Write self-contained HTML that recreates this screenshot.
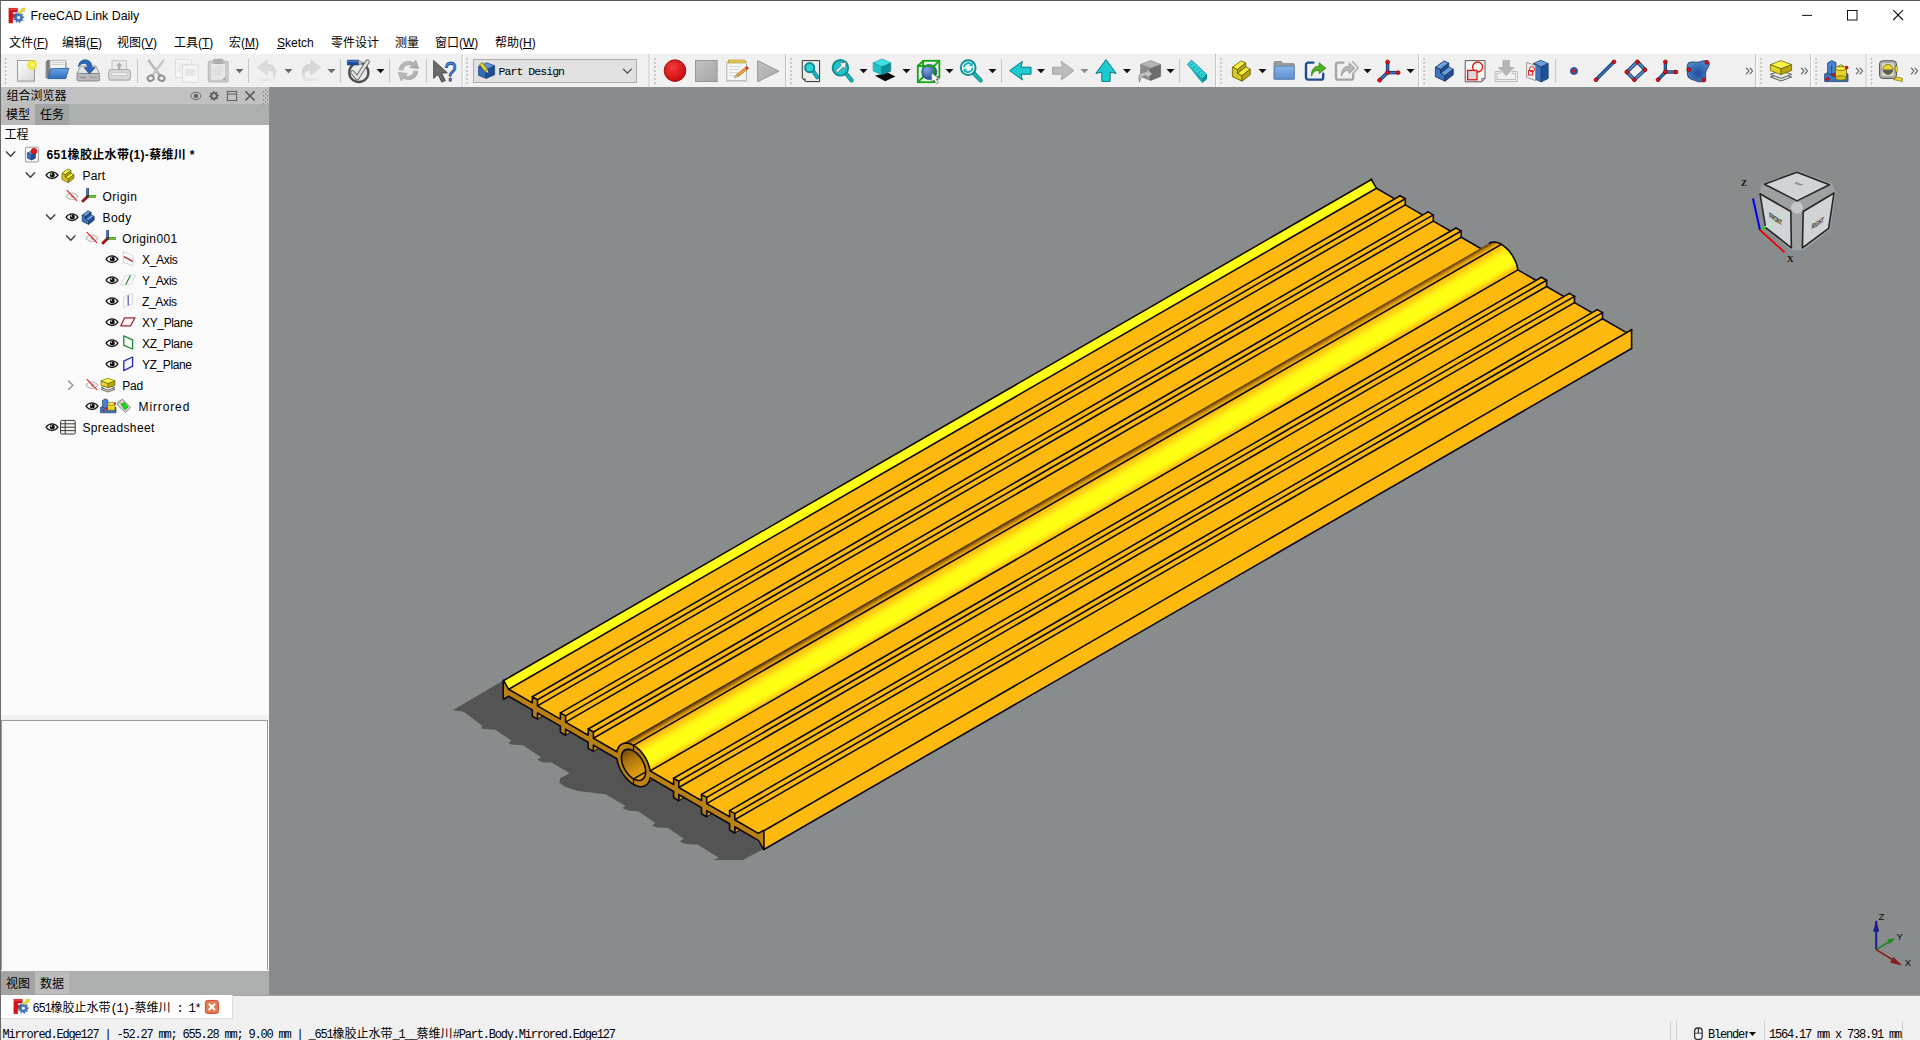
<!DOCTYPE html>
<html lang="zh-CN"><head><meta charset="utf-8"><title>FreeCAD Link Daily</title>
<style>
html,body{margin:0;padding:0;}
body{width:1920px;height:1040px;overflow:hidden;position:relative;background:#f0f0f0;font-family:"Liberation Sans","Noto Sans CJK SC",sans-serif;font-size:12px;color:#000;}
.abs{position:absolute;}
#titlebar{left:0;top:0;width:1920px;height:31px;background:#fff;}
#menubar{left:0;top:31px;width:1920px;height:23px;background:#fff;}
#winborder{left:0;top:0;width:1920px;height:1040px;box-sizing:border-box;border-left:1px solid #6b6b6b;border-top:1px solid #555;pointer-events:none;z-index:50;}
#title{left:30.5px;top:8px;font-size:12.4px;line-height:16px;white-space:nowrap;}
.menu{top:35px;line-height:16px;font-size:12px;white-space:nowrap;}
.menu u{text-decoration:underline;text-underline-offset:1px;}
#toolbar{left:0;top:54px;width:1920px;height:33px;background:#f0f0f0;}
#view3d{left:269px;top:87px;width:1651px;height:908px;background:#888c8d;overflow:hidden;}
#dock{left:1px;top:87px;width:268px;height:908px;background:#fafafa;}
#docktitle{left:0;top:0;width:268px;height:17px;background:#c1c1c1;}
#docktitle span{position:absolute;left:5.5px;top:1px;font-size:12px;line-height:17px;}
#tabs1{left:0;top:17px;width:268px;height:21px;background:#adafae;}
.tab{position:absolute;top:0;height:21px;line-height:23px;font-size:12px;text-align:center;}
#hdr{left:3.5px;top:40px;font-size:12px;line-height:17px;}
#band{left:0;top:628px;width:268px;height:5px;background:#f0f0f0;}
#panel2{left:0;top:633px;width:267px;height:250px;box-sizing:border-box;border:1px solid #9c9c9c;border-bottom:none;background:#fafafa;}
#tabs2{left:0;top:884px;width:268px;height:24px;background:#adafae;}
#mdibar{left:0;top:995px;width:1920px;height:25px;background:#f0f0f0;}
#mdiline{left:232px;top:0;width:1688px;height:1px;background:#a3a5a5;}
#mditab{left:1px;top:0px;width:231px;height:23px;background:#fff;border-right:1px solid #dadada;border-bottom:1px solid #dedede;}
#mditab span{position:absolute;left:31px;top:4px;font-size:12px;line-height:15px;white-space:nowrap;font-family:"Liberation Mono","Noto Sans CJK SC",monospace;}
#status{left:0;top:1020px;width:1920px;height:20px;background:#f0f0f0;}
.st{position:absolute;top:5.5px;line-height:14px;font-size:12px;white-space:nowrap;font-family:"Liberation Mono","Noto Sans CJK SC",monospace;letter-spacing:-1.2px;}
.row{position:absolute;left:0;width:268px;height:21px;line-height:24px;font-size:12px;white-space:nowrap;}
.row span{position:absolute;top:0;}
.row b{font-weight:700;}
svg{display:block;}

.st i,.st2 i{font-style:normal;letter-spacing:0;font-family:"Noto Sans CJK SC",sans-serif;}
#mditab span.st2{left:31.5px;top:3.5px;font-size:12px;line-height:15px;letter-spacing:-1.2px;font-family:"Liberation Mono","Noto Sans CJK SC",monospace;}

</style></head>
<body>
<div id="titlebar" class="abs"></div>
<div id="menubar" class="abs"></div>
<div id="title" class="abs">FreeCAD Link Daily</div>
<div class="abs menu" style="left:9px">文件(<u>F</u>)</div>
<div class="abs menu" style="left:62px">编辑(<u>E</u>)</div>
<div class="abs menu" style="left:117px">视图(<u>V</u>)</div>
<div class="abs menu" style="left:174px">工具(<u>T</u>)</div>
<div class="abs menu" style="left:229px">宏(<u>M</u>)</div>
<div class="abs menu" style="left:277px"><u>S</u>ketch</div>
<div class="abs menu" style="left:331px">零件设计</div>
<div class="abs menu" style="left:395px">测量</div>
<div class="abs menu" style="left:435px">窗口(<u>W</u>)</div>
<div class="abs menu" style="left:495px">帮助(<u>H</u>)</div>
<div id="toolbar" class="abs"><svg width="1920" height="33" viewBox="0 54 1920 33"><defs>
<linearGradient id="gpg" x1="0" y1="0" x2="1" y2="1"><stop offset="0" stop-color="#ffffff"/><stop offset="1" stop-color="#d6d6d6"/></linearGradient>
<radialGradient id="gglow"><stop offset="0" stop-color="#ffffff"/><stop offset="0.28" stop-color="#f6f040"/><stop offset="0.62" stop-color="#ece428" stop-opacity="0.95"/><stop offset="1" stop-color="#ece428" stop-opacity="0"/></radialGradient>
<linearGradient id="gblue" x1="0" y1="0" x2="0" y2="1"><stop offset="0" stop-color="#6ea4e4"/><stop offset="1" stop-color="#2f6fbe"/></linearGradient>
<linearGradient id="gblue2" x1="0" y1="0" x2="0" y2="1"><stop offset="0" stop-color="#8ab4e6"/><stop offset="1" stop-color="#5b90d2"/></linearGradient>
<radialGradient id="gred" cx="0.4" cy="0.35" r="0.7"><stop offset="0" stop-color="#f43a3a"/><stop offset="1" stop-color="#c20808"/></radialGradient>
<radialGradient id="gsph" cx="0.35" cy="0.35" r="0.75"><stop offset="0" stop-color="#7ea6e0"/><stop offset="1" stop-color="#1c4488"/></radialGradient>
<radialGradient id="gblob" cx="0.5" cy="0.6" r="0.6"><stop offset="0" stop-color="#1f4f96"/><stop offset="1" stop-color="#4f86cc"/></radialGradient>
<linearGradient id="ggray" x1="0" y1="0" x2="1" y2="1"><stop offset="0" stop-color="#c2c2c2"/><stop offset="1" stop-color="#a6a6a6"/></linearGradient>
</defs>
<rect x="4.9" y="58.2" width="1.7" height="1.7" fill="#b0b0b0"/><rect x="6" y="59.3" width="1.3" height="1.3" fill="#fdfdfd"/><rect x="4.9" y="62.25" width="1.7" height="1.7" fill="#b0b0b0"/><rect x="6" y="63.35" width="1.3" height="1.3" fill="#fdfdfd"/><rect x="4.9" y="66.3" width="1.7" height="1.7" fill="#b0b0b0"/><rect x="6" y="67.4" width="1.3" height="1.3" fill="#fdfdfd"/><rect x="4.9" y="70.35" width="1.7" height="1.7" fill="#b0b0b0"/><rect x="6" y="71.45" width="1.3" height="1.3" fill="#fdfdfd"/><rect x="4.9" y="74.4" width="1.7" height="1.7" fill="#b0b0b0"/><rect x="6" y="75.5" width="1.3" height="1.3" fill="#fdfdfd"/><rect x="4.9" y="78.45" width="1.7" height="1.7" fill="#b0b0b0"/><rect x="6" y="79.55" width="1.3" height="1.3" fill="#fdfdfd"/><rect x="4.9" y="82.5" width="1.7" height="1.7" fill="#b0b0b0"/><rect x="6" y="83.6" width="1.3" height="1.3" fill="#fdfdfd"/>
<rect x="17.5" y="60.5" width="17" height="20.5" fill="url(#gpg)" stroke="#9c9c9c" stroke-width="1"/>
<line x1="17" y1="81.8" x2="35" y2="81.8" stroke="#b8b8b8" stroke-width="1" stroke-linecap="butt"/>
<circle cx="32.2" cy="64.8" r="6" fill="url(#gglow)"/>
<path d="M46.5,62 l0.8,-1.5 h6 l1.2,1.8 h11.5 v15.5 h-19.5z" fill="#7e7e7e" stroke="#5e5e5e" stroke-width="0.8" stroke-linejoin="round" stroke-linecap="round"/>
<rect x="50" y="60.3" width="15.5" height="11" fill="#f2f2f2" stroke="#a8a8a8" stroke-width="0.8"/>
<line x1="52" y1="62.5" x2="63.5" y2="62.5" stroke="#c4c4c4" stroke-width="0.8" stroke-linecap="butt"/><line x1="52" y1="64.5" x2="63.5" y2="64.5" stroke="#c4c4c4" stroke-width="0.8" stroke-linecap="butt"/>
<polygon points="48,78.6 50.8,68.8 68.8,68.3 65.6,78.6" fill="url(#gblue)" stroke="#2a5ea6" stroke-width="0.9" stroke-linejoin="round"/>
<polygon points="80.5,66 96,66 99.5,73.5 77,73.5" fill="#e2e2e2" stroke="#8e8e8e" stroke-width="0.9" stroke-linejoin="round"/>
<rect x="77" y="73.5" width="22.5" height="7.5" fill="#b9b9b9" stroke="#868686" stroke-width="0.9" rx="1.2"/>
<line x1="80" y1="77.5" x2="86" y2="77.5" stroke="#8a8a8a" stroke-width="1.2" stroke-linecap="butt"/><line x1="90" y1="77.5" x2="97" y2="77.5" stroke="#9a9a9a" stroke-width="1.2" stroke-linecap="butt"/>
<path d="M78.6,66.5 C78.5,60.5 84.5,58.6 88.5,60.6 C91,61.9 92,64.5 91.8,67.6 L95.2,67.6 L89.3,74 L84.2,67.6 L87.6,67.6 C87.7,65 86.4,63.5 84.4,63.4 C82,63.3 80,64.4 78.6,66.5Z" fill="#2c68bc" stroke="#1d4c94" stroke-width="0.7" stroke-linejoin="round" stroke-linecap="round"/>
<rect x="112" y="60.8" width="14.5" height="10" fill="#ebebeb" stroke="#bdbdbd" stroke-width="0.9"/>
<polygon points="119.2,62.6 122.4,66 120.4,66 120.4,69 118,69 118,66 116,66" fill="#ababab"/>
<rect x="108.5" y="69.5" width="22" height="10.5" fill="#d6d6d6" stroke="#a4a4a4" stroke-width="0.9" rx="2.5"/>
<rect x="111.5" y="72.8" width="16" height="2.6" fill="#f6f6f6" stroke="#b0b0b0" stroke-width="0.6" rx="1"/>
<line x1="109.5" y1="80.6" x2="129.5" y2="80.6" stroke="#bcbcbc" stroke-width="1" stroke-linecap="butt"/>
<line x1="137.5" y1="59" x2="137.5" y2="83" stroke="#c8c8c8" stroke-width="1" stroke-linecap="butt"/>
<line x1="148.8" y1="60.6" x2="160.2" y2="76" stroke="#b4b4b4" stroke-width="2.4" stroke-linecap="round"/><line x1="163.4" y1="60.6" x2="152" y2="76" stroke="#c6c6c6" stroke-width="2.4" stroke-linecap="round"/>
<ellipse cx="150.7" cy="78.2" rx="3.1" ry="2.7" fill="none" stroke="#8e8e8e" stroke-width="1.9" transform="rotate(-25 150.7 78.2)"/>
<ellipse cx="161.5" cy="78.2" rx="3.1" ry="2.7" fill="none" stroke="#8e8e8e" stroke-width="1.9" transform="rotate(25 161.5 78.2)"/>
<rect x="175.5" y="59.6" width="16" height="18" fill="#f4f4f4" stroke="#dcdcdc" stroke-width="0.9"/>
<line x1="177.5" y1="64" x2="189" y2="64" stroke="#e2e2e2" stroke-width="0.8" stroke-linecap="butt"/>
<line x1="177.5" y1="66.4" x2="189" y2="66.4" stroke="#e2e2e2" stroke-width="0.8" stroke-linecap="butt"/>
<line x1="177.5" y1="68.8" x2="189" y2="68.8" stroke="#e2e2e2" stroke-width="0.8" stroke-linecap="butt"/>
<line x1="177.5" y1="71.2" x2="189" y2="71.2" stroke="#e2e2e2" stroke-width="0.8" stroke-linecap="butt"/>
<rect x="182.5" y="65" width="15.5" height="17" fill="#f7f7f7" stroke="#d4d4d4" stroke-width="0.9"/>
<rect x="185" y="68.5" width="10.5" height="7.5" fill="#e6e6e6"/>
<rect x="208.3" y="61.2" width="19.8" height="20.8" fill="#cdcdcd" stroke="#b4b4b4" stroke-width="1" rx="1.2"/>
<rect x="210.8" y="63.6" width="14.8" height="16.6" fill="#e6e6e6" stroke="#c0c0c0" stroke-width="0.6"/>
<rect x="213.5" y="59.2" width="9.4" height="4.2" fill="#b2b2b2" stroke="#9c9c9c" stroke-width="0.7" rx="1"/>
<line x1="212.5" y1="67" x2="222" y2="67" stroke="#d4d4d4" stroke-width="0.8" stroke-linecap="butt"/>
<line x1="212.5" y1="69.4" x2="222" y2="69.4" stroke="#d4d4d4" stroke-width="0.8" stroke-linecap="butt"/>
<line x1="212.5" y1="71.8" x2="222" y2="71.8" stroke="#d4d4d4" stroke-width="0.8" stroke-linecap="butt"/>
<line x1="212.5" y1="74.2" x2="222" y2="74.2" stroke="#d4d4d4" stroke-width="0.8" stroke-linecap="butt"/>
<polygon points="222,80.2 225.6,76.6 225.6,80.2" fill="#a8a8a8"/>
<polygon points="235.5,69 243.5,69 239.5,73.2" fill="#6a6a6a"/>
<line x1="248.5" y1="59" x2="248.5" y2="83" stroke="#c8c8c8" stroke-width="1" stroke-linecap="butt"/>
<path d="M257.5,67.2 L267.2,59.8 L267.2,64.4 C274.5,64.2 278.5,70.5 273.5,78.6 C275,72.8 272.5,70.2 267.2,70.4 L267.2,74.8Z" fill="#dadada" stroke="#d0d0d0" stroke-width="0.6" stroke-linejoin="round" stroke-linecap="round"/>
<ellipse cx="267" cy="79.6" rx="8.5" ry="1.6" fill="#e6e6e6"/>
<polygon points="284.5,69 292.5,69 288.5,73.2" fill="#6a6a6a"/>
<path d="M320.5,67.2 L310.8,59.8 L310.8,64.4 C303.5,64.2 299.5,70.5 304.5,78.6 C303,72.8 305.5,70.2 310.8,70.4 L310.8,74.8Z" fill="#d6d6d6" stroke="#cccccc" stroke-width="0.6" stroke-linejoin="round" stroke-linecap="round"/>
<ellipse cx="311" cy="79.6" rx="8.5" ry="1.6" fill="#e6e6e6"/>
<polygon points="327.5,69 335.5,69 331.5,73.2" fill="#6a6a6a"/>
<line x1="340.5" y1="59" x2="340.5" y2="83" stroke="#c8c8c8" stroke-width="1" stroke-linecap="butt"/>
<circle cx="358.8" cy="72.4" r="9.6" fill="#e9e9e9" stroke="#4e4e4e" stroke-width="2.3"/>
<path d="M352.6,72.4 L357.2,78 L367.6,61.6" fill="none" stroke="#6c6c6c" stroke-width="4.6" stroke-linejoin="round" stroke-linecap="round"/>
<path d="M352.6,72.4 L357.2,78 L367.6,61.6" fill="none" stroke="#e2e2e2" stroke-width="2.6" stroke-linejoin="round" stroke-linecap="round"/>
<polygon points="347.4,60.2 358.6,60.2 358.6,65 347.4,65" fill="#1d4d9c" stroke="#143a78" stroke-width="0.6" stroke-linejoin="round"/>
<polygon points="358.6,60.2 363.6,62.6 358.6,65" fill="#c8c8c8" stroke="#666" stroke-width="0.6" stroke-linejoin="round"/>
<line x1="347.6" y1="61.4" x2="358.4" y2="61.4" stroke="#5f8ad0" stroke-width="0.9" stroke-linecap="butt"/>
<polygon points="376.5,69 384.5,69 380.5,73.2" fill="#111"/>
<line x1="389.5" y1="59" x2="389.5" y2="83" stroke="#c8c8c8" stroke-width="1" stroke-linecap="butt"/>
<path d="M399.2,69.6 C399.6,62.8 407.4,59.4 413.6,62.8 L415.6,60 L418.8,68.6 L409.8,67.6 L411.8,65.2 C408,63.6 403.6,65.6 403.2,69.8Z" fill="url(#ggray)" stroke="#a2a2a2" stroke-width="0.7" stroke-linejoin="round" stroke-linecap="round"/>
<path d="M417.8,71.4 C417.4,78.2 409.6,81.6 403.4,78.2 L401.4,81 L398.2,72.4 L407.2,73.4 L405.2,75.8 C409,77.4 413.4,75.4 413.8,71.2Z" fill="url(#ggray)" stroke="#a2a2a2" stroke-width="0.7" stroke-linejoin="round" stroke-linecap="round"/>
<line x1="426.5" y1="59" x2="426.5" y2="83" stroke="#c8c8c8" stroke-width="1" stroke-linecap="butt"/>
<polygon points="433.6,60.4 433.6,78.4 438,74.6 441.8,82.2 445.4,80.6 441.6,73.2 447.4,72.8" fill="#6a6a66" stroke="#3e3e3c" stroke-width="0.8" stroke-linejoin="round"/>
<text x="444.4" y="81" font-family="Liberation Sans,sans-serif" font-size="28" fill="#4f8ad6" stroke="#1d4c98" stroke-width="1" textLength="12" lengthAdjust="spacingAndGlyphs">?</text>
<line x1="462.2" y1="54" x2="462.2" y2="87" stroke="#bcbcbc" stroke-width="1" stroke-linecap="butt"/><line x1="463.3" y1="54" x2="463.3" y2="87" stroke="#fcfcfc" stroke-width="1.2" stroke-linecap="butt"/>
<rect x="466.4" y="58.2" width="1.7" height="1.7" fill="#b0b0b0"/><rect x="467.5" y="59.3" width="1.3" height="1.3" fill="#fdfdfd"/><rect x="466.4" y="62.25" width="1.7" height="1.7" fill="#b0b0b0"/><rect x="467.5" y="63.35" width="1.3" height="1.3" fill="#fdfdfd"/><rect x="466.4" y="66.3" width="1.7" height="1.7" fill="#b0b0b0"/><rect x="467.5" y="67.4" width="1.3" height="1.3" fill="#fdfdfd"/><rect x="466.4" y="70.35" width="1.7" height="1.7" fill="#b0b0b0"/><rect x="467.5" y="71.45" width="1.3" height="1.3" fill="#fdfdfd"/><rect x="466.4" y="74.4" width="1.7" height="1.7" fill="#b0b0b0"/><rect x="467.5" y="75.5" width="1.3" height="1.3" fill="#fdfdfd"/><rect x="466.4" y="78.45" width="1.7" height="1.7" fill="#b0b0b0"/><rect x="467.5" y="79.55" width="1.3" height="1.3" fill="#fdfdfd"/><rect x="466.4" y="82.5" width="1.7" height="1.7" fill="#b0b0b0"/><rect x="467.5" y="83.6" width="1.3" height="1.3" fill="#fdfdfd"/>
<rect x="473.5" y="59.5" width="163" height="23" fill="#e1e1e1" stroke="#adadad" stroke-width="1"/>
<polygon points="478.6,66.4 486.2,69.6 486.2,78.4 478.6,75.4" fill="#2f6cbc" stroke="#173e80" stroke-width="0.7" stroke-linejoin="round"/>
<polygon points="486.2,69.6 494.6,65.8 494.6,74.8 486.2,78.4" fill="#1c4c94" stroke="#173e80" stroke-width="0.7" stroke-linejoin="round"/>
<polygon points="478.6,66.4 486.8,62.8 494.6,65.8 486.2,69.6" fill="#5d93dc" stroke="#173e80" stroke-width="0.7" stroke-linejoin="round"/>
<polygon points="479.6,64.6 482.4,62.6 487.6,69.4 484.8,71.4" fill="#e8d43c" stroke="#6a5a00" stroke-width="0.7" stroke-linejoin="round"/>
<polygon points="484.8,71.4 487.6,69.4 488.6,73.2" fill="#f4f0e8" stroke="#555" stroke-width="0.6" stroke-linejoin="round"/>
<text x="498.5" y="75" font-family="Liberation Mono,monospace" font-size="11.5" fill="#000" textLength="66.5" lengthAdjust="spacing">Part Design</text>
<path d="M623.4,69.2 L627.4,73.2 L631.4,69.2" fill="none" stroke="#444" stroke-width="1.2" stroke-linejoin="round" stroke-linecap="round"/>
<line x1="649.2" y1="54" x2="649.2" y2="87" stroke="#bcbcbc" stroke-width="1" stroke-linecap="butt"/><line x1="650.3" y1="54" x2="650.3" y2="87" stroke="#fcfcfc" stroke-width="1.2" stroke-linecap="butt"/>
<rect x="654.4" y="58.2" width="1.7" height="1.7" fill="#b0b0b0"/><rect x="655.5" y="59.3" width="1.3" height="1.3" fill="#fdfdfd"/><rect x="654.4" y="62.25" width="1.7" height="1.7" fill="#b0b0b0"/><rect x="655.5" y="63.35" width="1.3" height="1.3" fill="#fdfdfd"/><rect x="654.4" y="66.3" width="1.7" height="1.7" fill="#b0b0b0"/><rect x="655.5" y="67.4" width="1.3" height="1.3" fill="#fdfdfd"/><rect x="654.4" y="70.35" width="1.7" height="1.7" fill="#b0b0b0"/><rect x="655.5" y="71.45" width="1.3" height="1.3" fill="#fdfdfd"/><rect x="654.4" y="74.4" width="1.7" height="1.7" fill="#b0b0b0"/><rect x="655.5" y="75.5" width="1.3" height="1.3" fill="#fdfdfd"/><rect x="654.4" y="78.45" width="1.7" height="1.7" fill="#b0b0b0"/><rect x="655.5" y="79.55" width="1.3" height="1.3" fill="#fdfdfd"/><rect x="654.4" y="82.5" width="1.7" height="1.7" fill="#b0b0b0"/><rect x="655.5" y="83.6" width="1.3" height="1.3" fill="#fdfdfd"/>
<circle cx="675" cy="70.6" r="10.8" fill="url(#gred)" stroke="#9c0606" stroke-width="0.9"/>
<rect x="695.5" y="60.5" width="21.6" height="21" fill="url(#ggray)" stroke="#969696" stroke-width="1"/>
<rect x="726.8" y="62" width="19.6" height="18.4" fill="#f5f5f3" stroke="#adadad" stroke-width="0.9"/>
<line x1="726" y1="81" x2="747.4" y2="81" stroke="#c4c4c4" stroke-width="1.2" stroke-linecap="butt"/>
<rect x="728.6" y="60" width="16.4" height="3" fill="#d8b83a" stroke="#a88c1c" stroke-width="0.6"/>
<line x1="730" y1="59.8" x2="730" y2="62.8" stroke="#f4e49a" stroke-width="0.6" stroke-linecap="butt"/>
<line x1="732" y1="59.8" x2="732" y2="62.8" stroke="#f4e49a" stroke-width="0.6" stroke-linecap="butt"/>
<line x1="734" y1="59.8" x2="734" y2="62.8" stroke="#f4e49a" stroke-width="0.6" stroke-linecap="butt"/>
<line x1="736" y1="59.8" x2="736" y2="62.8" stroke="#f4e49a" stroke-width="0.6" stroke-linecap="butt"/>
<line x1="738" y1="59.8" x2="738" y2="62.8" stroke="#f4e49a" stroke-width="0.6" stroke-linecap="butt"/>
<line x1="740" y1="59.8" x2="740" y2="62.8" stroke="#f4e49a" stroke-width="0.6" stroke-linecap="butt"/>
<line x1="742" y1="59.8" x2="742" y2="62.8" stroke="#f4e49a" stroke-width="0.6" stroke-linecap="butt"/>
<line x1="744" y1="59.8" x2="744" y2="62.8" stroke="#f4e49a" stroke-width="0.6" stroke-linecap="butt"/>
<line x1="729.5" y1="66.5" x2="741" y2="66.5" stroke="#cfcfcf" stroke-width="0.8" stroke-linecap="butt"/>
<line x1="729.5" y1="69.5" x2="739.8" y2="69.5" stroke="#cfcfcf" stroke-width="0.8" stroke-linecap="butt"/>
<line x1="729.5" y1="72.5" x2="738.6" y2="72.5" stroke="#cfcfcf" stroke-width="0.8" stroke-linecap="butt"/>
<line x1="729.5" y1="75.5" x2="737.4" y2="75.5" stroke="#cfcfcf" stroke-width="0.8" stroke-linecap="butt"/>
<polygon points="736.6,74.4 745.4,67.4 747.2,69.6 738.2,76.6" fill="#eaa03a" stroke="#a8661a" stroke-width="0.6" stroke-linejoin="round"/>
<polygon points="745.4,67.4 747,66.2 748.6,68.4 747.2,69.6" fill="#e43a3a" stroke="#a01818" stroke-width="0.5" stroke-linejoin="round"/>
<polygon points="736.6,74.4 738.2,76.6 734.2,77.6" fill="#e8d8b0" stroke="#7a5a2a" stroke-width="0.5" stroke-linejoin="round"/>
<polygon points="757.6,60.6 779,71.2 757.6,81.8" fill="url(#ggray)" stroke="#9a9a9a" stroke-width="1" stroke-linejoin="round"/>
<line x1="785.7" y1="54" x2="785.7" y2="87" stroke="#bcbcbc" stroke-width="1" stroke-linecap="butt"/><line x1="786.8" y1="54" x2="786.8" y2="87" stroke="#fcfcfc" stroke-width="1.2" stroke-linecap="butt"/>
<rect x="790.4" y="58.2" width="1.7" height="1.7" fill="#b0b0b0"/><rect x="791.5" y="59.3" width="1.3" height="1.3" fill="#fdfdfd"/><rect x="790.4" y="62.25" width="1.7" height="1.7" fill="#b0b0b0"/><rect x="791.5" y="63.35" width="1.3" height="1.3" fill="#fdfdfd"/><rect x="790.4" y="66.3" width="1.7" height="1.7" fill="#b0b0b0"/><rect x="791.5" y="67.4" width="1.3" height="1.3" fill="#fdfdfd"/><rect x="790.4" y="70.35" width="1.7" height="1.7" fill="#b0b0b0"/><rect x="791.5" y="71.45" width="1.3" height="1.3" fill="#fdfdfd"/><rect x="790.4" y="74.4" width="1.7" height="1.7" fill="#b0b0b0"/><rect x="791.5" y="75.5" width="1.3" height="1.3" fill="#fdfdfd"/><rect x="790.4" y="78.45" width="1.7" height="1.7" fill="#b0b0b0"/><rect x="791.5" y="79.55" width="1.3" height="1.3" fill="#fdfdfd"/><rect x="790.4" y="82.5" width="1.7" height="1.7" fill="#b0b0b0"/><rect x="791.5" y="83.6" width="1.3" height="1.3" fill="#fdfdfd"/>
<path d="M802.6,60.6 H819.6 V81.6 H805.6 L802.6,78.6Z" fill="#ecece6" stroke="#333" stroke-width="1" stroke-linejoin="round" stroke-linecap="round"/>
<polygon points="802.6,78.6 805.6,78.6 805.6,81.6" fill="#555"/>
<line x1="812.82" y1="70.82" x2="817.4" y2="77.4" stroke="#0e8c94" stroke-width="4.2" stroke-linecap="round"/><line x1="812.82" y1="70.82" x2="817.4" y2="77.4" stroke="#19b4bc" stroke-width="2.4" stroke-linecap="round"/><circle cx="809.6" cy="67.6" r="4.6" fill="#2fd0d6" stroke="#0e8c94" stroke-width="1.9"/>
<line x1="845.86" y1="73.26" x2="851.6" y2="80.4" stroke="#0e8c94" stroke-width="4.2" stroke-linecap="round"/><line x1="845.86" y1="73.26" x2="851.6" y2="80.4" stroke="#19b4bc" stroke-width="2.4" stroke-linecap="round"/><circle cx="840.4" cy="67.8" r="7.8" fill="#22c4ca" stroke="#0e8c94" stroke-width="1.9"/>
<polygon points="846.2,62.2 845.2,69 843.2,67 837.6,72.6 835.8,70.8 841.4,65.2 839.4,63.2" fill="#f2f2f2" stroke="#6a6a6a" stroke-width="0.7" stroke-linejoin="round"/>
<polygon points="859.5,69 867.5,69 863.5,73.2" fill="#111"/>
<polygon points="875,75.8 885.2,81.2 895.4,76.4 887.6,72.4" fill="#0a0a0a"/>
<polygon points="873.2,62.8 882,66.6 882,74.8 873.2,71" fill="#1fc0c6" stroke="#11979e" stroke-width="0.6" stroke-linejoin="round"/>
<polygon points="882,66.6 890.8,62.8 890.8,71.2 882,74.8" fill="#0e9098" stroke="#0a7a82" stroke-width="0.6" stroke-linejoin="round"/>
<polygon points="882,59 890.8,62.8 882,66.6 873.2,62.8" fill="#3fe0e4" stroke="#11979e" stroke-width="0.6" stroke-linejoin="round"/>
<polygon points="902.5,69 910.5,69 906.5,73.2" fill="#111"/>
<rect x="923.2" y="60.8" width="16.2" height="16.2" fill="none" stroke="#12a412" stroke-width="1.8"/>
<circle cx="929.2" cy="72" r="7.6" fill="url(#gsph)" stroke="#16356c" stroke-width="0.6"/>
<rect x="917.8" y="66" width="16.2" height="16.2" fill="none" stroke="#12a412" stroke-width="1.8"/>
<line x1="917.8" y1="66" x2="923.2" y2="60.8" stroke="#12a412" stroke-width="1.8" stroke-linecap="butt"/>
<line x1="934" y1="66" x2="939.4" y2="60.8" stroke="#12a412" stroke-width="1.8" stroke-linecap="butt"/>
<line x1="917.8" y1="82.2" x2="923.2" y2="77" stroke="#12a412" stroke-width="1.8" stroke-linecap="butt"/>
<line x1="934" y1="82.2" x2="939.4" y2="77" stroke="#12a412" stroke-width="1.8" stroke-linecap="butt"/>
<polygon points="931.6,73 931.6,82 934,80 936.4,83.6 938.4,82.6 936.2,79 939.4,78.8" fill="#f4f4f4" stroke="#777" stroke-width="0.8" stroke-linejoin="round"/>
<polygon points="945.5,69 953.5,69 949.5,73.2" fill="#111"/>
<line x1="973.38" y1="72.78" x2="980.6" y2="80.4" stroke="#0e8c94" stroke-width="4.2" stroke-linecap="round"/><line x1="973.38" y1="72.78" x2="980.6" y2="80.4" stroke="#19b4bc" stroke-width="2.4" stroke-linecap="round"/><circle cx="968.2" cy="67.6" r="7.4" fill="#eafafa" stroke="#0e8c94" stroke-width="1.9"/>
<path d="M964,66.6 A4.4,4.4 0 0 1 971.6,64.6 M972.4,68.6 A4.4,4.4 0 0 1 964.8,70.6" fill="none" stroke="#19b4bc" stroke-width="2" stroke-linejoin="round" stroke-linecap="round"/>
<polygon points="972.8,62.4 972.8,66.4 969,65.8" fill="#19b4bc"/><polygon points="963.6,72.8 963.6,68.8 967.4,69.4" fill="#19b4bc"/>
<polygon points="988.5,69 996.5,69 992.5,73.2" fill="#111"/>
<line x1="1001.5" y1="59" x2="1001.5" y2="83" stroke="#c8c8c8" stroke-width="1" stroke-linecap="butt"/>
<polygon points="1009.6,70.6 1022.4,61.4 1021,67.2 1031,67.2 1031,74.2 1021,74.2 1022.4,80" fill="#1ccad2" stroke="#0a7a82" stroke-width="1" stroke-linejoin="round"/>
<polygon points="1037,69 1045,69 1041,73.2" fill="#111"/>
<polygon points="1074,70.6 1061.2,61.4 1062.6,67.2 1052.6,67.2 1052.6,74.2 1062.6,74.2 1061.2,80" fill="#bcbcbc" stroke="#a4a4a4" stroke-width="1" stroke-linejoin="round"/>
<polygon points="1080.5,69 1088.5,69 1084.5,73.2" fill="#8a8a8a"/>
<polygon points="1106,59.6 1116.2,73.4 1110.2,72.2 1110.2,81.4 1101.8,81.4 1101.8,72.2 1095.8,73.4" fill="#1ccad2" stroke="#0a7a82" stroke-width="1" stroke-linejoin="round"/>
<polygon points="1123,69 1131,69 1127,73.2" fill="#111"/>
<polygon points="1140.6,64.4 1150.6,68.2 1150.6,80.4 1140.6,76.4" fill="#8e8e8e" stroke="#6e6e6e" stroke-width="0.6" stroke-linejoin="round"/>
<polygon points="1150.6,68.2 1160.6,64.4 1160.6,76.4 1150.6,80.4" fill="#6c6c6c" stroke="#5a5a5a" stroke-width="0.6" stroke-linejoin="round"/>
<polygon points="1150.6,60.6 1160.6,64.4 1150.6,68.2 1140.6,64.4" fill="#b4b4b4" stroke="#7e7e7e" stroke-width="0.6" stroke-linejoin="round"/>
<path d="M1139.6,81.6 C1137.4,75.6 1140.6,71.8 1146.4,72 L1146.4,69 L1152.4,73.8 L1146.4,78.8 L1146.4,75.8 C1142.6,75.6 1140.4,77.6 1139.6,81.6Z" fill="#c2c2c2" stroke="#7a7a7a" stroke-width="0.8" stroke-linejoin="round" stroke-linecap="round"/>
<polygon points="1166.5,69 1174.5,69 1170.5,73.2" fill="#111"/>
<line x1="1179.5" y1="59" x2="1179.5" y2="83" stroke="#c8c8c8" stroke-width="1" stroke-linecap="butt"/>
<polygon points="1187.4,64.6 1191.6,60.2 1206.6,74.4 1202.4,78.8" fill="#2fd6dc" stroke="#0a8a92" stroke-width="0.9" stroke-linejoin="round"/>
<polygon points="1202.4,78.8 1206.6,74.4 1206.6,79 1202.4,82.6" fill="#0c98a0" stroke="#0a7a82" stroke-width="0.8" stroke-linejoin="round"/>
<polygon points="1187.4,64.6 1202.4,78.8 1202.4,82.6 1200,80.6" fill="#12a8b0"/>
<line x1="1192.6" y1="63.6" x2="1190.8" y2="65.5" stroke="#0a6a72" stroke-width="0.8" stroke-linecap="butt"/>
<line x1="1195.2" y1="66.1" x2="1192.6" y2="68.8" stroke="#0a6a72" stroke-width="0.8" stroke-linecap="butt"/>
<line x1="1197.8" y1="68.6" x2="1196" y2="70.5" stroke="#0a6a72" stroke-width="0.8" stroke-linecap="butt"/>
<line x1="1200.4" y1="71.1" x2="1197.8" y2="73.8" stroke="#0a6a72" stroke-width="0.8" stroke-linecap="butt"/>
<line x1="1203" y1="73.6" x2="1201.2" y2="75.5" stroke="#0a6a72" stroke-width="0.8" stroke-linecap="butt"/>
<line x1="1215.7" y1="54" x2="1215.7" y2="87" stroke="#bcbcbc" stroke-width="1" stroke-linecap="butt"/><line x1="1216.8" y1="54" x2="1216.8" y2="87" stroke="#fcfcfc" stroke-width="1.2" stroke-linecap="butt"/>
<rect x="1220.4" y="58.2" width="1.7" height="1.7" fill="#b0b0b0"/><rect x="1221.5" y="59.3" width="1.3" height="1.3" fill="#fdfdfd"/><rect x="1220.4" y="62.25" width="1.7" height="1.7" fill="#b0b0b0"/><rect x="1221.5" y="63.35" width="1.3" height="1.3" fill="#fdfdfd"/><rect x="1220.4" y="66.3" width="1.7" height="1.7" fill="#b0b0b0"/><rect x="1221.5" y="67.4" width="1.3" height="1.3" fill="#fdfdfd"/><rect x="1220.4" y="70.35" width="1.7" height="1.7" fill="#b0b0b0"/><rect x="1221.5" y="71.45" width="1.3" height="1.3" fill="#fdfdfd"/><rect x="1220.4" y="74.4" width="1.7" height="1.7" fill="#b0b0b0"/><rect x="1221.5" y="75.5" width="1.3" height="1.3" fill="#fdfdfd"/><rect x="1220.4" y="78.45" width="1.7" height="1.7" fill="#b0b0b0"/><rect x="1221.5" y="79.55" width="1.3" height="1.3" fill="#fdfdfd"/><rect x="1220.4" y="82.5" width="1.7" height="1.7" fill="#b0b0b0"/><rect x="1221.5" y="83.6" width="1.3" height="1.3" fill="#fdfdfd"/>
<polygon points="1232.4,67.25 1241.18,60.8 1245.75,63.05 1237.5,69.5" fill="#f6ee38" stroke="#5c5a00" stroke-width="0.8" stroke-linejoin="round"/><polygon points="1232.4,67.25 1237.5,69.5 1237.5,73.4 1242,75.65 1242,81.2 1232.4,76.7" fill="#dcc81c" stroke="#5c5a00" stroke-width="0.8" stroke-linejoin="round"/><polygon points="1237.5,69.5 1245.75,63.05 1245.75,66.95 1237.5,73.4" fill="#b8a40e" stroke="#5c5a00" stroke-width="0.8" stroke-linejoin="round"/><polygon points="1237.5,73.4 1245.75,66.95 1250.25,69.2 1242,75.65" fill="#f6ee38" stroke="#5c5a00" stroke-width="0.8" stroke-linejoin="round"/><polygon points="1242,75.65 1250.25,69.2 1250.25,74.75 1242,81.2" fill="#b8a40e" stroke="#5c5a00" stroke-width="0.8" stroke-linejoin="round"/>
<polygon points="1258.5,69 1266.5,69 1262.5,73.2" fill="#111"/>
<path d="M1274,62.6 a1,1 0 0 1 1,-1 h6.4 l1.6,2 h10.4 a1,1 0 0 1 1,1 v14.6 h-20.4z" fill="#9a9a9a" stroke="#808080" stroke-width="0.7" stroke-linejoin="round" stroke-linecap="round"/>
<rect x="1274.6" y="66.2" width="19.6" height="13" fill="url(#gblue2)" stroke="#4a7ec0" stroke-width="0.7" rx="0.8"/>
<path d="M1313.4,62.6 h-5.2 a2.2,2.2 0 0 0 -2.2,2.2 v12.6 a2.2,2.2 0 0 0 2.2,2.2 h12.8 a2.2,2.2 0 0 0 2.2,-2.2 v-3.6" fill="none" stroke="#1d4f8f" stroke-width="2.4" stroke-linejoin="round" stroke-linecap="round"/>
<path d="M1311.6,75.6 C1311,69.6 1314.4,66.2 1319.2,66.2 L1319.2,62.8 L1325.8,68.2 L1319.2,73.6 L1319.2,70.4 C1315.6,70.2 1313,71.8 1311.6,75.6Z" fill="#4eb422" stroke="#2a7a10" stroke-width="0.8" stroke-linejoin="round" stroke-linecap="round"/>
<path d="M1343.4,62.6 h-5.2 a2.2,2.2 0 0 0 -2.2,2.2 v12.6 a2.2,2.2 0 0 0 2.2,2.2 h12.8 a2.2,2.2 0 0 0 2.2,-2.2 v-3.6" fill="none" stroke="#a6a6a6" stroke-width="2.4" stroke-linejoin="round" stroke-linecap="round"/>
<path d="M1341.6,75.6 C1341,69.6 1344.4,66.2 1349.2,66.2 L1349.2,62.8 L1354.8,68.2 L1349.2,73.6 L1349.2,70.4 C1345.6,70.2 1343,71.8 1341.6,75.6Z" fill="#b6b6b6" stroke="#8e8e8e" stroke-width="0.8" stroke-linejoin="round" stroke-linecap="round"/>
<path d="M1352.6,61.6 L1358.2,67.8 L1352.6,74" fill="none" stroke="#b0b0b0" stroke-width="1.6" stroke-linejoin="round" stroke-linecap="round"/>
<polygon points="1363.5,69 1371.5,69 1367.5,73.2" fill="#111"/>
<line x1="1387.6" y1="72.6" x2="1387.6" y2="62" stroke="#16345e" stroke-width="3.4" stroke-linecap="butt"/><line x1="1387.6" y1="72.6" x2="1398.2" y2="72.6" stroke="#16345e" stroke-width="3.4" stroke-linecap="butt"/><line x1="1387.6" y1="72.6" x2="1379.6" y2="80.2" stroke="#16345e" stroke-width="3.4" stroke-linecap="butt"/><line x1="1387.6" y1="72.6" x2="1387.6" y2="62" stroke="#3b73c4" stroke-width="1.8" stroke-linecap="butt"/><line x1="1387.6" y1="72.6" x2="1398.2" y2="72.6" stroke="#3b73c4" stroke-width="1.8" stroke-linecap="butt"/><line x1="1387.6" y1="72.6" x2="1379.6" y2="80.2" stroke="#3b73c4" stroke-width="1.8" stroke-linecap="butt"/><circle cx="1387.6" cy="62" r="1.9" fill="#ee1111" stroke="#7a0000" stroke-width="0.7"/><circle cx="1398.2" cy="72.6" r="1.9" fill="#ee1111" stroke="#7a0000" stroke-width="0.7"/><circle cx="1379.6" cy="80.2" r="1.9" fill="#ee1111" stroke="#7a0000" stroke-width="0.7"/><circle cx="1387.6" cy="72.6" r="1.9" fill="#ee1111" stroke="#7a0000" stroke-width="0.7"/>
<polygon points="1406.5,69 1414.5,69 1410.5,73.2" fill="#111"/>
<line x1="1418.7" y1="54" x2="1418.7" y2="87" stroke="#bcbcbc" stroke-width="1" stroke-linecap="butt"/><line x1="1419.8" y1="54" x2="1419.8" y2="87" stroke="#fcfcfc" stroke-width="1.2" stroke-linecap="butt"/>
<rect x="1423.4" y="58.2" width="1.7" height="1.7" fill="#b0b0b0"/><rect x="1424.5" y="59.3" width="1.3" height="1.3" fill="#fdfdfd"/><rect x="1423.4" y="62.25" width="1.7" height="1.7" fill="#b0b0b0"/><rect x="1424.5" y="63.35" width="1.3" height="1.3" fill="#fdfdfd"/><rect x="1423.4" y="66.3" width="1.7" height="1.7" fill="#b0b0b0"/><rect x="1424.5" y="67.4" width="1.3" height="1.3" fill="#fdfdfd"/><rect x="1423.4" y="70.35" width="1.7" height="1.7" fill="#b0b0b0"/><rect x="1424.5" y="71.45" width="1.3" height="1.3" fill="#fdfdfd"/><rect x="1423.4" y="74.4" width="1.7" height="1.7" fill="#b0b0b0"/><rect x="1424.5" y="75.5" width="1.3" height="1.3" fill="#fdfdfd"/><rect x="1423.4" y="78.45" width="1.7" height="1.7" fill="#b0b0b0"/><rect x="1424.5" y="79.55" width="1.3" height="1.3" fill="#fdfdfd"/><rect x="1423.4" y="82.5" width="1.7" height="1.7" fill="#b0b0b0"/><rect x="1424.5" y="83.6" width="1.3" height="1.3" fill="#fdfdfd"/>
<polygon points="1435.4,67.25 1444.18,60.8 1448.75,63.05 1440.5,69.5" fill="#6c9ede" stroke="#16345e" stroke-width="0.8" stroke-linejoin="round"/><polygon points="1435.4,67.25 1440.5,69.5 1440.5,73.4 1445,75.65 1445,81.2 1435.4,76.7" fill="#3b73c0" stroke="#16345e" stroke-width="0.8" stroke-linejoin="round"/><polygon points="1440.5,69.5 1448.75,63.05 1448.75,66.95 1440.5,73.4" fill="#1f4f96" stroke="#16345e" stroke-width="0.8" stroke-linejoin="round"/><polygon points="1440.5,73.4 1448.75,66.95 1453.25,69.2 1445,75.65" fill="#6c9ede" stroke="#16345e" stroke-width="0.8" stroke-linejoin="round"/><polygon points="1445,75.65 1453.25,69.2 1453.25,74.75 1445,81.2" fill="#1f4f96" stroke="#16345e" stroke-width="0.8" stroke-linejoin="round"/>
<path d="M1465.6,60.6 H1485 V78.4 L1481.6,81.8 H1465.6Z" fill="#f5f5f1" stroke="#4a4a4a" stroke-width="0.9" stroke-linejoin="round" stroke-linecap="round"/>
<polygon points="1485,78.4 1481.6,78.4 1481.6,81.8" fill="#b4b4b4" stroke="#555" stroke-width="0.6" stroke-linejoin="round"/>
<circle cx="1477.6" cy="67" r="5" fill="none" stroke="#e21212" stroke-width="1.3"/>
<rect x="1467.6" y="70.4" width="9.4" height="9.4" fill="#d8d8d8" stroke="#e21212" stroke-width="1.3"/>
<polygon points="1503,60.4 1509.4,60.4 1509.4,67.6 1513.8,67.6 1506.2,75.6 1498.6,67.6 1503,67.6" fill="#b6b6b6" stroke="#a0a0a0" stroke-width="0.7" stroke-linejoin="round"/>
<path d="M1499.6,72.4 H1496 V80.6 H1516.6 V72.4 H1513" fill="none" stroke="#b0b0b0" stroke-width="2.6" stroke-linejoin="round" stroke-linecap="round"/>
<path d="M1499.6,72.4 H1496 V80.6 H1516.6 V72.4 H1513" fill="none" stroke="#f8f8f8" stroke-width="1" stroke-linejoin="round" stroke-linecap="round"/>
<polygon points="1533.6,63.4 1540.6,60.2 1548.2,63.6 1541.2,67" fill="#6c9ede" stroke="#16345e" stroke-width="0.7" stroke-linejoin="round"/>
<polygon points="1541.2,67 1548.2,63.6 1548.2,78.4 1541.2,82" fill="#1f4f96" stroke="#16345e" stroke-width="0.7" stroke-linejoin="round"/>
<polygon points="1533.6,63.4 1541.2,67 1541.2,82 1533.6,78.4" fill="#3b73c0" stroke="#16345e" stroke-width="0.7" stroke-linejoin="round"/>
<polygon points="1526.6,62.4 1535.6,65.4 1535.6,80.6 1526.6,77.4" fill="#eeeeea" stroke="#7a7a7a" stroke-width="0.7" stroke-linejoin="round"/>
<circle cx="1532" cy="69.2" r="2.6" fill="none" stroke="#e21212" stroke-width="0.9"/><rect x="1528.6" y="70.4" width="4" height="4.6" fill="none" stroke="#e21212" stroke-width="0.9"/>
<line x1="1555.5" y1="59" x2="1555.5" y2="83" stroke="#c8c8c8" stroke-width="1" stroke-linecap="butt"/>
<circle cx="1574" cy="71" r="3.6" fill="#2b5db4" stroke="#16345e" stroke-width="0.6"/><circle cx="1574" cy="71" r="1.8" fill="#ee1111"/>
<line x1="1596" y1="79.8" x2="1614" y2="61.8" stroke="#16345e" stroke-width="3.4" stroke-linecap="butt"/><line x1="1596" y1="79.8" x2="1614" y2="61.8" stroke="#3b73c4" stroke-width="1.8" stroke-linecap="butt"/>
<circle cx="1596" cy="79.8" r="1.9" fill="#ee1111" stroke="#7a0000" stroke-width="0.7"/><circle cx="1614" cy="61.8" r="1.9" fill="#ee1111" stroke="#7a0000" stroke-width="0.7"/>
<polygon points="1637.4,61.8 1645,69.8 1634.4,79.8 1626.8,72" fill="none" stroke="#16345e" stroke-width="3.6" stroke-linejoin="round"/><polygon points="1637.4,61.8 1645,69.8 1634.4,79.8 1626.8,72" fill="none" stroke="#3b73c4" stroke-width="2" stroke-linejoin="round"/><polygon points="1637.4,61.8 1645,69.8 1634.4,79.8 1626.8,72" fill="none" stroke="#9cc0ee" stroke-width="0.6" stroke-linejoin="round"/>
<circle cx="1637.4" cy="61.8" r="1.9" fill="#ee1111" stroke="#7a0000" stroke-width="0.7"/>
<circle cx="1645" cy="69.8" r="1.9" fill="#ee1111" stroke="#7a0000" stroke-width="0.7"/>
<circle cx="1634.4" cy="79.8" r="1.9" fill="#ee1111" stroke="#7a0000" stroke-width="0.7"/>
<circle cx="1626.8" cy="72" r="1.9" fill="#ee1111" stroke="#7a0000" stroke-width="0.7"/>
<line x1="1665.4" y1="72" x2="1665.4" y2="61.8" stroke="#16345e" stroke-width="3.4" stroke-linecap="butt"/><line x1="1665.4" y1="72" x2="1676" y2="72" stroke="#16345e" stroke-width="3.4" stroke-linecap="butt"/><line x1="1665.4" y1="72" x2="1658" y2="79.8" stroke="#16345e" stroke-width="3.4" stroke-linecap="butt"/><line x1="1665.4" y1="72" x2="1665.4" y2="61.8" stroke="#3b73c4" stroke-width="1.8" stroke-linecap="butt"/><line x1="1665.4" y1="72" x2="1676" y2="72" stroke="#3b73c4" stroke-width="1.8" stroke-linecap="butt"/><line x1="1665.4" y1="72" x2="1658" y2="79.8" stroke="#3b73c4" stroke-width="1.8" stroke-linecap="butt"/><circle cx="1665.4" cy="61.8" r="1.9" fill="#ee1111" stroke="#7a0000" stroke-width="0.7"/><circle cx="1676" cy="72" r="1.9" fill="#ee1111" stroke="#7a0000" stroke-width="0.7"/><circle cx="1658" cy="79.8" r="1.9" fill="#ee1111" stroke="#7a0000" stroke-width="0.7"/><circle cx="1665.4" cy="72" r="1.9" fill="#ee1111" stroke="#7a0000" stroke-width="0.7"/>
<path d="M1688.4,63 C1692,60.4 1696.6,63.4 1700.6,61.6 C1704,60.2 1708.6,60.2 1709.2,63.4 C1709.8,67 1706,69 1705.6,72.6 C1705.4,75.6 1706.6,79 1704.4,80.8 C1701.6,82.8 1697.8,81.6 1694.6,80.4 C1691.6,79.2 1688,78.6 1687.6,75.4 C1687.2,71.6 1686.2,65 1688.4,63Z" fill="url(#gblob)" stroke="#16345e" stroke-width="0.8" stroke-linejoin="round" stroke-linecap="round"/>
<circle cx="1707" cy="62.4" r="1.9" fill="#ee1111" stroke="#7a0000" stroke-width="0.7"/>
<circle cx="1689" cy="69.6" r="1.9" fill="#ee1111" stroke="#7a0000" stroke-width="0.7"/>
<circle cx="1704" cy="80" r="1.9" fill="#ee1111" stroke="#7a0000" stroke-width="0.7"/>
<path d="M1746.4,68.2 l2.6,2.8 l-2.6,2.8 M1750,68.2 l2.6,2.8 l-2.6,2.8" fill="none" stroke="#555" stroke-width="1.1" stroke-linejoin="round" stroke-linecap="round"/>
<line x1="1755.7" y1="54" x2="1755.7" y2="87" stroke="#bcbcbc" stroke-width="1" stroke-linecap="butt"/><line x1="1756.8" y1="54" x2="1756.8" y2="87" stroke="#fcfcfc" stroke-width="1.2" stroke-linecap="butt"/>
<rect x="1760.4" y="58.2" width="1.7" height="1.7" fill="#b0b0b0"/><rect x="1761.5" y="59.3" width="1.3" height="1.3" fill="#fdfdfd"/><rect x="1760.4" y="62.25" width="1.7" height="1.7" fill="#b0b0b0"/><rect x="1761.5" y="63.35" width="1.3" height="1.3" fill="#fdfdfd"/><rect x="1760.4" y="66.3" width="1.7" height="1.7" fill="#b0b0b0"/><rect x="1761.5" y="67.4" width="1.3" height="1.3" fill="#fdfdfd"/><rect x="1760.4" y="70.35" width="1.7" height="1.7" fill="#b0b0b0"/><rect x="1761.5" y="71.45" width="1.3" height="1.3" fill="#fdfdfd"/><rect x="1760.4" y="74.4" width="1.7" height="1.7" fill="#b0b0b0"/><rect x="1761.5" y="75.5" width="1.3" height="1.3" fill="#fdfdfd"/><rect x="1760.4" y="78.45" width="1.7" height="1.7" fill="#b0b0b0"/><rect x="1761.5" y="79.55" width="1.3" height="1.3" fill="#fdfdfd"/><rect x="1760.4" y="82.5" width="1.7" height="1.7" fill="#b0b0b0"/><rect x="1761.5" y="83.6" width="1.3" height="1.3" fill="#fdfdfd"/>
<polygon points="1781,73 1791.6,77 1781,81 1770.4,77" fill="#dedede" stroke="#4e4e4e" stroke-width="0.9" stroke-linejoin="round"/>
<polygon points="1781,70.6 1791.6,74.4 1781,78.4 1770.4,74.4" fill="#e8e8e8" stroke="#4e4e4e" stroke-width="0.9" stroke-linejoin="round"/>
<polygon points="1770.4,64.6 1781,68.6 1781,74.6 1770.4,70.6" fill="#e6d422" stroke="#5c5a00" stroke-width="0.7" stroke-linejoin="round"/>
<polygon points="1781,68.6 1791.6,64.6 1791.6,70.6 1781,74.6" fill="#b8a40e" stroke="#5c5a00" stroke-width="0.7" stroke-linejoin="round"/>
<polygon points="1781,60.6 1791.6,64.6 1781,68.6 1770.4,64.6" fill="#faf246" stroke="#5c5a00" stroke-width="0.7" stroke-linejoin="round"/>
<path d="M1801.4,68.2 l2.6,2.8 l-2.6,2.8 M1805,68.2 l2.6,2.8 l-2.6,2.8" fill="none" stroke="#555" stroke-width="1.1" stroke-linejoin="round" stroke-linecap="round"/>
<line x1="1810.7" y1="54" x2="1810.7" y2="87" stroke="#bcbcbc" stroke-width="1" stroke-linecap="butt"/><line x1="1811.8" y1="54" x2="1811.8" y2="87" stroke="#fcfcfc" stroke-width="1.2" stroke-linecap="butt"/>
<rect x="1815.4" y="58.2" width="1.7" height="1.7" fill="#b0b0b0"/><rect x="1816.5" y="59.3" width="1.3" height="1.3" fill="#fdfdfd"/><rect x="1815.4" y="62.25" width="1.7" height="1.7" fill="#b0b0b0"/><rect x="1816.5" y="63.35" width="1.3" height="1.3" fill="#fdfdfd"/><rect x="1815.4" y="66.3" width="1.7" height="1.7" fill="#b0b0b0"/><rect x="1816.5" y="67.4" width="1.3" height="1.3" fill="#fdfdfd"/><rect x="1815.4" y="70.35" width="1.7" height="1.7" fill="#b0b0b0"/><rect x="1816.5" y="71.45" width="1.3" height="1.3" fill="#fdfdfd"/><rect x="1815.4" y="74.4" width="1.7" height="1.7" fill="#b0b0b0"/><rect x="1816.5" y="75.5" width="1.3" height="1.3" fill="#fdfdfd"/><rect x="1815.4" y="78.45" width="1.7" height="1.7" fill="#b0b0b0"/><rect x="1816.5" y="79.55" width="1.3" height="1.3" fill="#fdfdfd"/><rect x="1815.4" y="82.5" width="1.7" height="1.7" fill="#b0b0b0"/><rect x="1816.5" y="83.6" width="1.3" height="1.3" fill="#fdfdfd"/>
<polygon points="1824.6,74 1836,69 1848,74 1848,81.6 1824.6,81.6" fill="#3b73c0" stroke="#16345e" stroke-width="0.7" stroke-linejoin="round"/>
<polygon points="1827.6,63 1831.6,60.6 1836,62.6 1836,72.6 1831.6,75 1827.6,73" fill="#4a80cc" stroke="#16345e" stroke-width="0.7" stroke-linejoin="round"/>
<line x1="1831.6" y1="65" x2="1831.6" y2="75" stroke="#16345e" stroke-width="0.6" stroke-linecap="butt"/>
<rect x="1835.4" y="68.4" width="11" height="9.6" fill="#ecd62a" stroke="#5c5a00" stroke-width="0.7"/>
<ellipse cx="1840.9" cy="78" rx="5.5" ry="2.2" fill="#d8c21c" stroke="#5c5a00" stroke-width="0.7"/>
<ellipse cx="1840.9" cy="68.4" rx="5.5" ry="2.2" fill="#f8ee4a" stroke="#5c5a00" stroke-width="0.7"/>
<polygon points="1838,66.6 1841,64.4 1844,66.6" fill="#f8ee4a" stroke="#5c5a00" stroke-width="0.6" stroke-linejoin="round"/>
<circle cx="1846.6" cy="67.6" r="1.5" fill="#ee1111" stroke="#7a0000" stroke-width="0.5"/>
<circle cx="1833.6" cy="75" r="1.5" fill="#ee1111" stroke="#7a0000" stroke-width="0.5"/>
<circle cx="1827.6" cy="79" r="1.5" fill="#ee1111" stroke="#7a0000" stroke-width="0.5"/>
<path d="M1856.4,68.2 l2.6,2.8 l-2.6,2.8 M1860,68.2 l2.6,2.8 l-2.6,2.8" fill="none" stroke="#555" stroke-width="1.1" stroke-linejoin="round" stroke-linecap="round"/>
<line x1="1866.2" y1="54" x2="1866.2" y2="87" stroke="#bcbcbc" stroke-width="1" stroke-linecap="butt"/><line x1="1867.3" y1="54" x2="1867.3" y2="87" stroke="#fcfcfc" stroke-width="1.2" stroke-linecap="butt"/>
<rect x="1870.9" y="58.2" width="1.7" height="1.7" fill="#b0b0b0"/><rect x="1872" y="59.3" width="1.3" height="1.3" fill="#fdfdfd"/><rect x="1870.9" y="62.25" width="1.7" height="1.7" fill="#b0b0b0"/><rect x="1872" y="63.35" width="1.3" height="1.3" fill="#fdfdfd"/><rect x="1870.9" y="66.3" width="1.7" height="1.7" fill="#b0b0b0"/><rect x="1872" y="67.4" width="1.3" height="1.3" fill="#fdfdfd"/><rect x="1870.9" y="70.35" width="1.7" height="1.7" fill="#b0b0b0"/><rect x="1872" y="71.45" width="1.3" height="1.3" fill="#fdfdfd"/><rect x="1870.9" y="74.4" width="1.7" height="1.7" fill="#b0b0b0"/><rect x="1872" y="75.5" width="1.3" height="1.3" fill="#fdfdfd"/><rect x="1870.9" y="78.45" width="1.7" height="1.7" fill="#b0b0b0"/><rect x="1872" y="79.55" width="1.3" height="1.3" fill="#fdfdfd"/><rect x="1870.9" y="82.5" width="1.7" height="1.7" fill="#b0b0b0"/><rect x="1872" y="83.6" width="1.3" height="1.3" fill="#fdfdfd"/>
<path d="M1894,76.4 L1902.4,78.4 L1902.4,81.6 L1894,79.6Z" fill="#ecd62a" stroke="#5c5a00" stroke-width="0.6" stroke-linejoin="round" stroke-linecap="round"/>
<rect x="1879.6" y="60.8" width="16.8" height="17.6" fill="#b9b9b1" stroke="#4e4e4a" stroke-width="1" rx="3"/>
<rect x="1881.4" y="62.6" width="13.2" height="14" fill="#d6d6ce" stroke="#8a8a84" stroke-width="0.6" rx="2.2"/>
<circle cx="1888" cy="69.4" r="5" fill="#ecd62a" stroke="#5c5a00" stroke-width="0.7"/>
<path d="M1883,69.4 A5,5 0 0 0 1893,69.4Z" fill="#5e5e58"/>
<rect x="1895.4" y="66" width="1.8" height="6" fill="#e8d22a" stroke="#5c5a00" stroke-width="0.4"/>
<path d="M1911.4,68.2 l2.6,2.8 l-2.6,2.8 M1915,68.2 l2.6,2.8 l-2.6,2.8" fill="none" stroke="#555" stroke-width="1.1" stroke-linejoin="round" stroke-linecap="round"/></svg></div>
<div id="dock" class="abs">
  <div id="docktitle" class="abs"><span>组合浏览器</span></div>
  <div id="tabs1" class="abs">
    <div class="tab" style="left:0;width:34px;background:#bbbcbb">模型</div>
    <div class="tab" style="left:34px;width:34px;background:#a2a4a3">任务</div>
  </div>
  <div id="hdr" class="abs">工程</div>
  <svg class="abs" style="left:0;top:0" width="268" height="908" viewBox="1 87 268 908"><path d="M6.5,151.9 L10.6,156.3 L14.7,151.9" fill="none" stroke="#444" stroke-width="1.5" stroke-linejoin="round" stroke-linecap="round"/>
<g transform="translate(0,0.6)">
<rect x="25.4" y="146.6" width="13" height="14.8" fill="#f6f6f6" stroke="#8e8e8e" stroke-width="0.9" rx="1"/>
<polygon points="27.4,152.4 31.6,154.2 31.6,159.4 27.4,157.6" fill="#3b73c0" stroke="#16345e" stroke-width="0.6" stroke-linejoin="round"/>
<polygon points="31.6,154.2 35.4,152.4 35.4,157.6 31.6,159.4" fill="#1f4f96" stroke="#16345e" stroke-width="0.6" stroke-linejoin="round"/>
<polygon points="27.4,152.4 31.2,150.6 35.4,152.4 31.6,154.2" fill="#6c9ede" stroke="#16345e" stroke-width="0.6" stroke-linejoin="round"/>
<circle cx="34" cy="150.6" r="2.9" fill="#e21a1a" stroke="#8a0a0a" stroke-width="0.5"/>
</g>
<path d="M26.3,172.9 L30.4,177.3 L34.5,172.9" fill="none" stroke="#444" stroke-width="1.5" stroke-linejoin="round" stroke-linecap="round"/>
<path d="M46,175.2 C49,170.8 55,170.8 58,175.2 C55,179.6 49,179.6 46,175.2Z" fill="#ffffff" stroke="#1a1a1a" stroke-width="1.25" stroke-linejoin="round" stroke-linecap="round"/><circle cx="52.3" cy="175" r="2.5" fill="#111"/><circle cx="51.3" cy="174.1" r="0.8" fill="#e8e8e8"/>
<polygon points="62,173.3 67.85,169 70.9,170.5 65.4,174.8" fill="#f6ee38" stroke="#5c5a00" stroke-width="0.7" stroke-linejoin="round"/><polygon points="62,173.3 65.4,174.8 65.4,177.4 68.4,178.9 68.4,182.6 62,179.6" fill="#dcc81c" stroke="#5c5a00" stroke-width="0.7" stroke-linejoin="round"/><polygon points="65.4,174.8 70.9,170.5 70.9,173.1 65.4,177.4" fill="#b8a40e" stroke="#5c5a00" stroke-width="0.7" stroke-linejoin="round"/><polygon points="65.4,177.4 70.9,173.1 73.9,174.6 68.4,178.9" fill="#f6ee38" stroke="#5c5a00" stroke-width="0.7" stroke-linejoin="round"/><polygon points="68.4,178.9 73.9,174.6 73.9,178.3 68.4,182.6" fill="#b8a40e" stroke="#5c5a00" stroke-width="0.7" stroke-linejoin="round"/>
<path d="M66,196.2 C69,191.9 75,191.9 78,196.2 C75,200.5 69,200.5 66,196.2Z" fill="#fbfbfb" stroke="#b9b9b9" stroke-width="1.1" stroke-linejoin="round" stroke-linecap="round"/><circle cx="72.4" cy="196.2" r="1.9" fill="#c4c4c4"/><line x1="66.8" y1="190.2" x2="77" y2="200.8" stroke="#ee2020" stroke-width="1.2" stroke-linecap="butt"/>
<line x1="87.6" y1="196.4" x2="87.6" y2="188.2" stroke="#16346a" stroke-width="2.6" stroke-linecap="butt"/><line x1="87.6" y1="196.4" x2="87.6" y2="188.2" stroke="#3b73c4" stroke-width="1.3" stroke-linecap="butt"/><line x1="87.6" y1="196.4" x2="96" y2="196.4" stroke="#3a7a10" stroke-width="2.6" stroke-linecap="butt"/><line x1="87.6" y1="196.4" x2="96" y2="196.4" stroke="#6cc82a" stroke-width="1.3" stroke-linecap="butt"/><line x1="87.6" y1="196.4" x2="82.2" y2="201.8" stroke="#6a0a0a" stroke-width="2.8" stroke-linecap="butt"/><line x1="87.6" y1="196.4" x2="82.2" y2="201.8" stroke="#d01818" stroke-width="1.4" stroke-linecap="butt"/><circle cx="87.6" cy="196.4" r="1.3" fill="#333"/>
<path d="M46.5,214.9 L50.6,219.3 L54.7,214.9" fill="none" stroke="#444" stroke-width="1.5" stroke-linejoin="round" stroke-linecap="round"/>
<path d="M66,217.2 C69,212.8 75,212.8 78,217.2 C75,221.6 69,221.6 66,217.2Z" fill="#ffffff" stroke="#1a1a1a" stroke-width="1.25" stroke-linejoin="round" stroke-linecap="round"/><circle cx="72.3" cy="217" r="2.5" fill="#111"/><circle cx="71.3" cy="216.1" r="0.8" fill="#e8e8e8"/>
<polygon points="82.2,215.1 88.05,210.8 91.1,212.3 85.6,216.6" fill="#6c9ede" stroke="#16345e" stroke-width="0.7" stroke-linejoin="round"/><polygon points="82.2,215.1 85.6,216.6 85.6,219.2 88.6,220.7 88.6,224.4 82.2,221.4" fill="#3b73c0" stroke="#16345e" stroke-width="0.7" stroke-linejoin="round"/><polygon points="85.6,216.6 91.1,212.3 91.1,214.9 85.6,219.2" fill="#1f4f96" stroke="#16345e" stroke-width="0.7" stroke-linejoin="round"/><polygon points="85.6,219.2 91.1,214.9 94.1,216.4 88.6,220.7" fill="#6c9ede" stroke="#16345e" stroke-width="0.7" stroke-linejoin="round"/><polygon points="88.6,220.7 94.1,216.4 94.1,220.1 88.6,224.4" fill="#1f4f96" stroke="#16345e" stroke-width="0.7" stroke-linejoin="round"/>
<path d="M66.7,235.9 L70.8,240.3 L74.9,235.9" fill="none" stroke="#444" stroke-width="1.5" stroke-linejoin="round" stroke-linecap="round"/>
<path d="M86,238.2 C89,233.9 95,233.9 98,238.2 C95,242.5 89,242.5 86,238.2Z" fill="#fbfbfb" stroke="#b9b9b9" stroke-width="1.1" stroke-linejoin="round" stroke-linecap="round"/><circle cx="92.4" cy="238.2" r="1.9" fill="#c4c4c4"/><line x1="86.8" y1="232.2" x2="97" y2="242.8" stroke="#ee2020" stroke-width="1.2" stroke-linecap="butt"/>
<line x1="107.6" y1="238.4" x2="107.6" y2="230.2" stroke="#16346a" stroke-width="2.6" stroke-linecap="butt"/><line x1="107.6" y1="238.4" x2="107.6" y2="230.2" stroke="#3b73c4" stroke-width="1.3" stroke-linecap="butt"/><line x1="107.6" y1="238.4" x2="116" y2="238.4" stroke="#3a7a10" stroke-width="2.6" stroke-linecap="butt"/><line x1="107.6" y1="238.4" x2="116" y2="238.4" stroke="#6cc82a" stroke-width="1.3" stroke-linecap="butt"/><line x1="107.6" y1="238.4" x2="102.2" y2="243.8" stroke="#6a0a0a" stroke-width="2.8" stroke-linecap="butt"/><line x1="107.6" y1="238.4" x2="102.2" y2="243.8" stroke="#d01818" stroke-width="1.4" stroke-linecap="butt"/><circle cx="107.6" cy="238.4" r="1.3" fill="#333"/>
<path d="M106,259.2 C109,254.8 115,254.8 118,259.2 C115,263.6 109,263.6 106,259.2Z" fill="#ffffff" stroke="#1a1a1a" stroke-width="1.25" stroke-linejoin="round" stroke-linecap="round"/><circle cx="112.3" cy="259" r="2.5" fill="#111"/><circle cx="111.3" cy="258.1" r="0.8" fill="#e8e8e8"/>
<path d="M106,280.2 C109,275.8 115,275.8 118,280.2 C115,284.6 109,284.6 106,280.2Z" fill="#ffffff" stroke="#1a1a1a" stroke-width="1.25" stroke-linejoin="round" stroke-linecap="round"/><circle cx="112.3" cy="280" r="2.5" fill="#111"/><circle cx="111.3" cy="279.1" r="0.8" fill="#e8e8e8"/>
<path d="M106,301.2 C109,296.8 115,296.8 118,301.2 C115,305.6 109,305.6 106,301.2Z" fill="#ffffff" stroke="#1a1a1a" stroke-width="1.25" stroke-linejoin="round" stroke-linecap="round"/><circle cx="112.3" cy="301" r="2.5" fill="#111"/><circle cx="111.3" cy="300.1" r="0.8" fill="#e8e8e8"/>
<path d="M106,322.2 C109,317.8 115,317.8 118,322.2 C115,326.6 109,326.6 106,322.2Z" fill="#ffffff" stroke="#1a1a1a" stroke-width="1.25" stroke-linejoin="round" stroke-linecap="round"/><circle cx="112.3" cy="322" r="2.5" fill="#111"/><circle cx="111.3" cy="321.1" r="0.8" fill="#e8e8e8"/>
<path d="M106,343.2 C109,338.8 115,338.8 118,343.2 C115,347.6 109,347.6 106,343.2Z" fill="#ffffff" stroke="#1a1a1a" stroke-width="1.25" stroke-linejoin="round" stroke-linecap="round"/><circle cx="112.3" cy="343" r="2.5" fill="#111"/><circle cx="111.3" cy="342.1" r="0.8" fill="#e8e8e8"/>
<path d="M106,364.2 C109,359.8 115,359.8 118,364.2 C115,368.6 109,368.6 106,364.2Z" fill="#ffffff" stroke="#1a1a1a" stroke-width="1.25" stroke-linejoin="round" stroke-linecap="round"/><circle cx="112.3" cy="364" r="2.5" fill="#111"/><circle cx="111.3" cy="363.1" r="0.8" fill="#e8e8e8"/>
<polygon points="123.4,251.6 133,255.8 133,266.2 123.4,262" fill="#fafafa" stroke="#d4d4d4" stroke-width="0.9" stroke-linejoin="round"/>
<line x1="123.8" y1="256.6" x2="132.8" y2="261.4" stroke="#c02030" stroke-width="1.2" stroke-linecap="butt"/>
<polygon points="125.4,275.2 135.4,275.2 130.6,284.8 120.6,284.8" fill="#fafafa" stroke="#d4d4d4" stroke-width="0.9" stroke-linejoin="round"/>
<line x1="130.4" y1="275.2" x2="125.8" y2="284.6" stroke="#2a8a2a" stroke-width="1.2" stroke-linecap="butt"/>
<polygon points="123.6,296.8 132.6,293.2 132.6,303.8 123.6,307.6" fill="#fafafa" stroke="#d4d4d4" stroke-width="0.9" stroke-linejoin="round"/>
<line x1="128.2" y1="295.2" x2="128.2" y2="305.4" stroke="#5050c0" stroke-width="1.2" stroke-linecap="butt"/>
<polygon points="124.6,317.8 135,317.8 130.6,325.8 120.8,325.8" fill="#fdf4f4" stroke="#a02434" stroke-width="1.3" stroke-linejoin="round"/>
<polygon points="123.8,335.8 132.6,339.8 132.6,349 123.8,345.4" fill="#f4fdf4" stroke="#228434" stroke-width="1.3" stroke-linejoin="round"/>
<polygon points="123.8,361.2 132.6,357 132.6,366.2 123.8,370.6" fill="#f4f4fd" stroke="#2a2ab4" stroke-width="1.3" stroke-linejoin="round"/>
<path d="M68.6,381.1 L73,385.2 L68.6,389.3" fill="none" stroke="#9a9a9a" stroke-width="1.5" stroke-linejoin="round" stroke-linecap="round"/>
<path d="M86,385.2 C89,380.9 95,380.9 98,385.2 C95,389.5 89,389.5 86,385.2Z" fill="#fbfbfb" stroke="#b9b9b9" stroke-width="1.1" stroke-linejoin="round" stroke-linecap="round"/><circle cx="92.4" cy="385.2" r="1.9" fill="#c4c4c4"/><line x1="86.8" y1="379.2" x2="97" y2="389.8" stroke="#ee2020" stroke-width="1.2" stroke-linecap="butt"/>
<polygon points="108,386.8 115,389.4 108,392 101,389.4" fill="#dcdcdc" stroke="#5a5a5a" stroke-width="0.8" stroke-linejoin="round"/>
<polygon points="108,385 115,387.6 108,390.2 101,387.6" fill="#e8e8e8" stroke="#5a5a5a" stroke-width="0.8" stroke-linejoin="round"/>
<polygon points="101,380.8 108,383.4 108,387.8 101,385.2" fill="#e6d422" stroke="#5c5a00" stroke-width="0.6" stroke-linejoin="round"/>
<polygon points="108,383.4 115,380.8 115,385.2 108,387.8" fill="#b8a40e" stroke="#5c5a00" stroke-width="0.6" stroke-linejoin="round"/>
<polygon points="108,378.2 115,380.8 108,383.4 101,380.8" fill="#faf246" stroke="#5c5a00" stroke-width="0.6" stroke-linejoin="round"/>
<path d="M86,406.2 C89,401.8 95,401.8 98,406.2 C95,410.6 89,410.6 86,406.2Z" fill="#ffffff" stroke="#1a1a1a" stroke-width="1.25" stroke-linejoin="round" stroke-linecap="round"/><circle cx="92.3" cy="406" r="2.5" fill="#111"/><circle cx="91.3" cy="405.1" r="0.8" fill="#e8e8e8"/>
<polygon points="100.4,407.6 108,404.2 116,407.6 116,412.8 100.4,412.8" fill="#3b73c0" stroke="#16345e" stroke-width="0.6" stroke-linejoin="round"/>
<polygon points="102.4,400.6 105,398.8 108,400.2 108,406.8 105,408.4 102.4,407" fill="#4a80cc" stroke="#16345e" stroke-width="0.6" stroke-linejoin="round"/>
<rect x="107.6" y="403.8" width="7.4" height="6.4" fill="#ecd62a" stroke="#5c5a00" stroke-width="0.6"/>
<ellipse cx="111.3" cy="403.8" rx="3.7" ry="1.5" fill="#f8ee4a" stroke="#5c5a00" stroke-width="0.6"/>
<circle cx="115" cy="403.4" r="1.1" fill="#ee1111"/><circle cx="103.4" cy="410.8" r="1.1" fill="#ee1111"/><circle cx="106.6" cy="408.6" r="1.1" fill="#ee1111"/>
<polygon points="118,402 122.6,399.2 130.6,407.6 125.4,412.4 117.6,405.2" fill="#d8d8d2" stroke="#7a7a74" stroke-width="0.9" stroke-linejoin="round"/>
<polygon points="121,404.2 124.4,402.4 128,407.2 124.8,409.8" fill="#18e018" stroke="#0a8a0a" stroke-width="0.6" stroke-linejoin="round"/>
<circle cx="120.2" cy="402.2" r="0.9" fill="#fff" stroke="#666" stroke-width="0.4"/>
<path d="M46,427.2 C49,422.8 55,422.8 58,427.2 C55,431.6 49,431.6 46,427.2Z" fill="#ffffff" stroke="#1a1a1a" stroke-width="1.25" stroke-linejoin="round" stroke-linecap="round"/><circle cx="52.3" cy="427" r="2.5" fill="#111"/><circle cx="51.3" cy="426.1" r="0.8" fill="#e8e8e8"/>
<rect x="60.6" y="420.4" width="14.6" height="13.6" fill="#f4f4f0" stroke="#3a3a3a" stroke-width="1" rx="1"/>
<line x1="60.6" y1="423.8" x2="75.2" y2="423.8" stroke="#3a3a3a" stroke-width="1" stroke-linecap="butt"/>
<line x1="60.6" y1="427.2" x2="75.2" y2="427.2" stroke="#3a3a3a" stroke-width="1" stroke-linecap="butt"/>
<line x1="60.6" y1="430.6" x2="75.2" y2="430.6" stroke="#3a3a3a" stroke-width="1" stroke-linecap="butt"/>
<line x1="65.2" y1="420.4" x2="65.2" y2="434" stroke="#3a3a3a" stroke-width="1" stroke-linecap="butt"/></svg><div class="row" style="top:56.3px"><span style="left:45.6px;letter-spacing:0.324px"><b>651橡胶止水带(1)-蔡维川 *</b></span></div><div class="row" style="top:77.3px"><span style="left:81.6px;letter-spacing:0.148px">Part</span></div><div class="row" style="top:98.3px"><span style="left:101.4px;letter-spacing:0.516px">Origin</span></div><div class="row" style="top:119.3px"><span style="left:101.4px;letter-spacing:0.513px">Body</span></div><div class="row" style="top:140.3px"><span style="left:121.2px;letter-spacing:0.365px">Origin001</span></div><div class="row" style="top:161.3px"><span style="left:141px;letter-spacing:-0.310px">X_Axis</span></div><div class="row" style="top:182.3px"><span style="left:141px;letter-spacing:-0.443px">Y_Axis</span></div><div class="row" style="top:203.3px"><span style="left:141px;letter-spacing:-0.331px">Z_Axis</span></div><div class="row" style="top:224.3px"><span style="left:141px;letter-spacing:-0.347px">XY_Plane</span></div><div class="row" style="top:245.3px"><span style="left:141px;letter-spacing:-0.263px">XZ_Plane</span></div><div class="row" style="top:266.3px"><span style="left:141px;letter-spacing:-0.388px">YZ_Plane</span></div><div class="row" style="top:287.3px"><span style="left:121.2px;letter-spacing:-0.149px">Pad</span></div><div class="row" style="top:308.3px"><span style="left:137.5px;letter-spacing:0.879px">Mirrored</span></div><div class="row" style="top:329.3px"><span style="left:81.4px;letter-spacing:0.395px">Spreadsheet</span></div>
  <div id="band" class="abs"></div>
  <div id="panel2" class="abs"></div>
  <div id="tabs2" class="abs">
    <div class="tab" style="left:0;top:1px;width:34px;height:23px;line-height:25px;background:#a2a4a3">视图</div>
    <div class="tab" style="left:34px;top:1px;width:34px;height:22px;line-height:25px;background:#bbbcbb">数据</div>
  </div>
</div>
<div id="view3d" class="abs">
<svg width="1651" height="908" viewBox="269 87 1651 908">
<defs>
<linearGradient id="gb" gradientUnits="userSpaceOnUse" x1="621.6" y1="744.2" x2="645.5" y2="785.5">
<stop offset="0.000" stop-color="#2e1c02"/>
<stop offset="0.025" stop-color="#5a3a05"/>
<stop offset="0.050" stop-color="#8a5a08"/>
<stop offset="0.075" stop-color="#b27a0c"/>
<stop offset="0.100" stop-color="#d4920e"/>
<stop offset="0.125" stop-color="#eaa60e"/>
<stop offset="0.150" stop-color="#f7b20e"/>
<stop offset="0.180" stop-color="#fdb90e"/>
<stop offset="0.250" stop-color="#fed212"/>
<stop offset="0.350" stop-color="#fff313"/>
<stop offset="0.430" stop-color="#ffff14"/>
<stop offset="0.610" stop-color="#ffff14"/>
<stop offset="0.690" stop-color="#ffea13"/>
<stop offset="0.750" stop-color="#fdc613"/>
<stop offset="0.790" stop-color="#fdb90e"/>
<stop offset="1.000" stop-color="#fdb90e"/>
</linearGradient>
<linearGradient id="gf" gradientUnits="userSpaceOnUse" x1="503.6" y1="680.5" x2="508.8" y2="689.4">
<stop offset="0.00" stop-color="#fff613"/>
<stop offset="0.10" stop-color="#ffff14"/>
<stop offset="0.85" stop-color="#ffff14"/>
<stop offset="1.00" stop-color="#fed813"/>
</linearGradient>
<linearGradient id="gi" gradientUnits="userSpaceOnUse" x1="625.0" y1="750.1" x2="642.1" y2="779.6">
<stop offset="0.00" stop-color="#74490a"/>
<stop offset="0.30" stop-color="#a9720c"/>
<stop offset="0.70" stop-color="#d9960f"/>
<stop offset="1.00" stop-color="#eaa410"/>
</linearGradient>
</defs>
<polygon fill="#545454" points="501.9,681.2 452.8,710.3 463.8,711.8 481.8,725.6 481.8,728.7 495.6,729.8 511.4,740.4 508.3,742.9 511.4,744.6 523.1,745.2 541.0,757.3 537.4,759.4 542.1,762.2 551.6,762.6 569.6,773.2 560.1,778.4 559.4,782.7 565.4,786.9 578.0,791.1 605.5,794.3 625.6,806.0 622.5,808.0 627.8,810.6 638.3,811.2 655.3,822.9 652.1,825.4 657.4,827.5 668.0,828.1 683.8,838.7 679.6,841.5 685.9,844.0 697.6,844.4 718.7,857.8 713.4,859.9 743.0,859.9 763.1,849.3 700.0,760.0"/>
<polygon fill="#fdb90e" stroke="#fdb90e" stroke-width="0.6" points="503.2,680.2 503.6,680.5 1371.4,179.5 1371.0,179.2"/>
<line x1="1371.0" y1="179.2" x2="1371.4" y2="179.5" stroke="#0a0a18" stroke-width="1.6" stroke-linecap="round"/>
<polygon fill="#ffff14" stroke="#ffff14" stroke-width="0.6" points="503.6,680.5 508.7,689.3 1376.5,188.3 1371.4,179.5"/>
<line x1="1371.4" y1="179.5" x2="1376.5" y2="188.3" stroke="#0a0a18" stroke-width="1.6" stroke-linecap="round"/>
<line x1="503.6" y1="680.5" x2="1371.4" y2="179.5" stroke="#0a0a18" stroke-width="1.6" stroke-linecap="round"/>
<polygon fill="#fdb90e" stroke="#fdb90e" stroke-width="0.6" points="508.7,689.3 532.3,702.9 1400.1,201.9 1376.5,188.3"/>
<line x1="1376.5" y1="188.3" x2="1400.1" y2="201.9" stroke="#0a0a18" stroke-width="1.6" stroke-linecap="round"/>
<line x1="508.7" y1="689.3" x2="1376.5" y2="188.3" stroke="#0a0a18" stroke-width="1.6" stroke-linecap="round"/>
<polygon fill="#fdb90e" stroke="#fdb90e" stroke-width="0.6" points="532.3,696.7 537.5,699.7 1405.3,198.7 1400.1,195.7"/>
<line x1="1400.1" y1="195.7" x2="1405.3" y2="198.7" stroke="#0a0a18" stroke-width="1.6" stroke-linecap="round"/>
<line x1="532.3" y1="696.7" x2="1400.1" y2="195.7" stroke="#0a0a18" stroke-width="1.6" stroke-linecap="round"/>
<polygon fill="#fdb90e" stroke="#fdb90e" stroke-width="0.6" points="537.5,699.7 537.5,705.9 1405.3,204.9 1405.3,198.7"/>
<line x1="1405.3" y1="198.7" x2="1405.3" y2="204.9" stroke="#0a0a18" stroke-width="1.6" stroke-linecap="round"/>
<line x1="537.5" y1="699.7" x2="1405.3" y2="198.7" stroke="#0a0a18" stroke-width="1.6" stroke-linecap="round"/>
<polygon fill="#fdb90e" stroke="#fdb90e" stroke-width="0.6" points="537.5,705.9 560.4,719.1 1428.1,218.1 1405.3,204.9"/>
<line x1="1405.3" y1="204.9" x2="1428.1" y2="218.1" stroke="#0a0a18" stroke-width="1.6" stroke-linecap="round"/>
<line x1="537.5" y1="705.9" x2="1405.3" y2="204.9" stroke="#0a0a18" stroke-width="1.6" stroke-linecap="round"/>
<polygon fill="#fdb90e" stroke="#fdb90e" stroke-width="0.6" points="560.4,712.9 565.6,715.9 1433.3,214.9 1428.1,211.9"/>
<line x1="1428.1" y1="211.9" x2="1433.3" y2="214.9" stroke="#0a0a18" stroke-width="1.6" stroke-linecap="round"/>
<line x1="560.4" y1="712.9" x2="1428.1" y2="211.9" stroke="#0a0a18" stroke-width="1.6" stroke-linecap="round"/>
<polygon fill="#fdb90e" stroke="#fdb90e" stroke-width="0.6" points="565.6,715.9 565.6,722.1 1433.3,221.1 1433.3,214.9"/>
<line x1="1433.3" y1="214.9" x2="1433.3" y2="221.1" stroke="#0a0a18" stroke-width="1.6" stroke-linecap="round"/>
<line x1="565.6" y1="715.9" x2="1433.3" y2="214.9" stroke="#0a0a18" stroke-width="1.6" stroke-linecap="round"/>
<polygon fill="#fdb90e" stroke="#fdb90e" stroke-width="0.6" points="565.6,722.1 588.2,735.2 1456.0,234.2 1433.3,221.1"/>
<line x1="1433.3" y1="221.1" x2="1456.0" y2="234.2" stroke="#0a0a18" stroke-width="1.6" stroke-linecap="round"/>
<line x1="565.6" y1="722.1" x2="1433.3" y2="221.1" stroke="#0a0a18" stroke-width="1.6" stroke-linecap="round"/>
<polygon fill="#fdb90e" stroke="#fdb90e" stroke-width="0.6" points="588.2,729.0 593.4,732.0 1461.2,231.0 1456.0,228.0"/>
<line x1="1456.0" y1="228.0" x2="1461.2" y2="231.0" stroke="#0a0a18" stroke-width="1.6" stroke-linecap="round"/>
<line x1="588.2" y1="729.0" x2="1456.0" y2="228.0" stroke="#0a0a18" stroke-width="1.6" stroke-linecap="round"/>
<polygon fill="#fdb90e" stroke="#fdb90e" stroke-width="0.6" points="593.4,732.0 593.4,738.2 1461.2,237.2 1461.2,231.0"/>
<line x1="1461.2" y1="231.0" x2="1461.2" y2="237.2" stroke="#0a0a18" stroke-width="1.6" stroke-linecap="round"/>
<line x1="593.4" y1="732.0" x2="1461.2" y2="231.0" stroke="#0a0a18" stroke-width="1.6" stroke-linecap="round"/>
<polygon fill="#fdb90e" stroke="#fdb90e" stroke-width="0.6" points="593.4,738.2 616.9,751.8 1484.7,250.8 1461.2,237.2"/>
<line x1="1461.2" y1="237.2" x2="1484.7" y2="250.8" stroke="#0a0a18" stroke-width="1.6" stroke-linecap="round"/>
<line x1="593.4" y1="738.2" x2="1461.2" y2="237.2" stroke="#0a0a18" stroke-width="1.6" stroke-linecap="round"/>
<polygon fill="url(#gb)" points="621.6,744.2 622.7,743.6 623.9,743.3 625.2,743.1 626.6,743.1 628.0,743.2 629.5,743.6 631.0,744.1 632.5,744.8 634.1,745.7 635.6,746.7 637.1,747.8 638.6,749.1 640.0,750.6 641.4,752.1 642.7,753.8 644.0,755.5 645.1,757.3 646.2,759.2 647.1,761.2 648.0,763.1 648.7,765.1 649.3,767.1 649.8,769.0 650.2,770.9 1517.9,269.9 1517.6,268.0 1517.1,266.1 1516.5,264.1 1515.8,262.1 1514.9,260.2 1513.9,258.2 1512.9,256.3 1511.7,254.5 1510.5,252.8 1509.1,251.1 1507.8,249.6 1506.3,248.1 1504.8,246.8 1503.3,245.7 1501.8,244.7 1500.3,243.8 1498.8,243.1 1497.3,242.6 1495.8,242.2 1494.4,242.1 1493.0,242.1 1491.7,242.3 1490.5,242.6 1489.4,243.2"/>
<polyline fill="none" stroke="#0a0a18" stroke-width="1.6" stroke-linecap="round" points="1489.4,243.2 1490.5,242.6 1491.7,242.3 1493.0,242.1 1494.4,242.1 1495.8,242.2 1497.3,242.6 1498.8,243.1 1500.3,243.8 1501.8,244.7 1503.3,245.7 1504.8,246.8 1506.3,248.1 1507.8,249.6 1509.1,251.1 1510.5,252.8 1511.7,254.5 1512.9,256.3 1513.9,258.2 1514.9,260.2 1515.8,262.1 1516.5,264.1 1517.1,266.1 1517.6,268.0 1517.9,269.9"/>
<line x1="633.5" y1="745.4" x2="1501.3" y2="244.4" stroke="#0a0a18" stroke-width="1.6" stroke-linecap="round"/>
<polygon fill="#fdb90e" stroke="#fdb90e" stroke-width="0.6" points="650.2,770.9 673.6,784.5 1541.4,283.5 1517.9,269.9"/>
<line x1="1517.9" y1="269.9" x2="1541.4" y2="283.5" stroke="#0a0a18" stroke-width="1.6" stroke-linecap="round"/>
<line x1="650.2" y1="770.9" x2="1517.9" y2="269.9" stroke="#0a0a18" stroke-width="1.6" stroke-linecap="round"/>
<polygon fill="#fdb90e" stroke="#fdb90e" stroke-width="0.6" points="673.6,778.3 678.8,781.3 1546.6,280.3 1541.4,277.3"/>
<line x1="1541.4" y1="277.3" x2="1546.6" y2="280.3" stroke="#0a0a18" stroke-width="1.6" stroke-linecap="round"/>
<line x1="673.6" y1="778.3" x2="1541.4" y2="277.3" stroke="#0a0a18" stroke-width="1.6" stroke-linecap="round"/>
<polygon fill="#fdb90e" stroke="#fdb90e" stroke-width="0.6" points="678.8,781.3 678.8,787.5 1546.6,286.5 1546.6,280.3"/>
<line x1="1546.6" y1="280.3" x2="1546.6" y2="286.5" stroke="#0a0a18" stroke-width="1.6" stroke-linecap="round"/>
<line x1="678.8" y1="781.3" x2="1546.6" y2="280.3" stroke="#0a0a18" stroke-width="1.6" stroke-linecap="round"/>
<polygon fill="#fdb90e" stroke="#fdb90e" stroke-width="0.6" points="678.8,787.5 701.5,800.6 1569.3,299.6 1546.6,286.5"/>
<line x1="1546.6" y1="286.5" x2="1569.3" y2="299.6" stroke="#0a0a18" stroke-width="1.6" stroke-linecap="round"/>
<line x1="678.8" y1="787.5" x2="1546.6" y2="286.5" stroke="#0a0a18" stroke-width="1.6" stroke-linecap="round"/>
<polygon fill="#fdb90e" stroke="#fdb90e" stroke-width="0.6" points="701.5,794.4 706.7,797.4 1574.5,296.4 1569.3,293.4"/>
<line x1="1569.3" y1="293.4" x2="1574.5" y2="296.4" stroke="#0a0a18" stroke-width="1.6" stroke-linecap="round"/>
<line x1="701.5" y1="794.4" x2="1569.3" y2="293.4" stroke="#0a0a18" stroke-width="1.6" stroke-linecap="round"/>
<polygon fill="#fdb90e" stroke="#fdb90e" stroke-width="0.6" points="706.7,797.4 706.7,803.6 1574.5,302.6 1574.5,296.4"/>
<line x1="1574.5" y1="296.4" x2="1574.5" y2="302.6" stroke="#0a0a18" stroke-width="1.6" stroke-linecap="round"/>
<line x1="706.7" y1="797.4" x2="1574.5" y2="296.4" stroke="#0a0a18" stroke-width="1.6" stroke-linecap="round"/>
<polygon fill="#fdb90e" stroke="#fdb90e" stroke-width="0.6" points="706.7,803.6 729.6,816.8 1597.3,315.8 1574.5,302.6"/>
<line x1="1574.5" y1="302.6" x2="1597.3" y2="315.8" stroke="#0a0a18" stroke-width="1.6" stroke-linecap="round"/>
<line x1="706.7" y1="803.6" x2="1574.5" y2="302.6" stroke="#0a0a18" stroke-width="1.6" stroke-linecap="round"/>
<polygon fill="#fdb90e" stroke="#fdb90e" stroke-width="0.6" points="729.6,810.6 734.8,813.6 1602.5,312.6 1597.3,309.6"/>
<line x1="1597.3" y1="309.6" x2="1602.5" y2="312.6" stroke="#0a0a18" stroke-width="1.6" stroke-linecap="round"/>
<line x1="729.6" y1="810.6" x2="1597.3" y2="309.6" stroke="#0a0a18" stroke-width="1.6" stroke-linecap="round"/>
<polygon fill="#fdb90e" stroke="#fdb90e" stroke-width="0.6" points="734.8,813.6 734.8,819.8 1602.5,318.8 1602.5,312.6"/>
<line x1="1602.5" y1="312.6" x2="1602.5" y2="318.8" stroke="#0a0a18" stroke-width="1.6" stroke-linecap="round"/>
<line x1="734.8" y1="813.6" x2="1602.5" y2="312.6" stroke="#0a0a18" stroke-width="1.6" stroke-linecap="round"/>
<polygon fill="#fdb90e" stroke="#fdb90e" stroke-width="0.6" points="734.8,819.8 758.3,833.4 1626.1,332.4 1602.5,318.8"/>
<line x1="1602.5" y1="318.8" x2="1626.1" y2="332.4" stroke="#0a0a18" stroke-width="1.6" stroke-linecap="round"/>
<line x1="734.8" y1="819.8" x2="1602.5" y2="318.8" stroke="#0a0a18" stroke-width="1.6" stroke-linecap="round"/>
<polygon fill="#fdb90e" stroke="#fdb90e" stroke-width="0.6" points="763.4,830.5 763.9,830.7 1631.6,329.7 1631.2,329.5"/>
<line x1="1631.2" y1="329.5" x2="1631.6" y2="329.7" stroke="#0a0a18" stroke-width="1.6" stroke-linecap="round"/>
<polygon fill="#fdb90e" stroke="#fdb90e" stroke-width="0.6" points="763.9,830.7 763.9,849.5 1631.6,348.5 1631.6,329.7"/>
<line x1="1631.6" y1="329.7" x2="1631.6" y2="348.5" stroke="#0a0a18" stroke-width="1.6" stroke-linecap="round"/>
<line x1="763.9" y1="830.7" x2="1631.6" y2="329.7" stroke="#0a0a18" stroke-width="1.6" stroke-linecap="round"/>
<line x1="763.9" y1="849.5" x2="1631.6" y2="348.5" stroke="#0a0a18" stroke-width="1.6" stroke-linecap="round"/>
<polygon fill="#d9980f" stroke="#0a0a18" stroke-width="1" stroke-linejoin="round" points="537.5,719.1 542.9,716.0 537.5,712.9"/>
<polygon fill="#d9980f" stroke="#0a0a18" stroke-width="1" stroke-linejoin="round" points="565.6,735.3 570.9,732.2 565.6,729.1"/>
<polygon fill="#d9980f" stroke="#0a0a18" stroke-width="1" stroke-linejoin="round" points="593.4,751.4 598.8,748.3 593.4,745.2"/>
<polygon fill="#d9980f" stroke="#0a0a18" stroke-width="1" stroke-linejoin="round" points="734.8,833.0 740.1,829.9 734.8,826.8"/>
<polygon fill="#d9980f" stroke="#0a0a18" stroke-width="1" stroke-linejoin="round" points="706.7,816.8 712.1,813.7 706.7,810.6"/>
<polygon fill="#d9980f" stroke="#0a0a18" stroke-width="1" stroke-linejoin="round" points="678.8,800.7 684.2,797.6 678.8,794.5"/>
<polygon fill="#e5a210" stroke="#0a0a18" stroke-width="1" points="645.5,785.5 646.5,784.9 647.4,784.0 648.2,783.0 648.8,781.9 649.4,780.7 649.8,779.3 650.2,777.8 650.2,777.9 657.1,775.9"/>
<polygon fill="url(#gi)" points="645.7,771.9 645.5,769.6 645.1,767.2 644.3,764.7 643.3,762.3 642.1,759.9 640.7,757.6 639.0,755.6 637.3,753.7 635.4,752.1 633.5,750.9 631.6,749.9 629.8,749.4 628.0,749.2 626.4,749.4 625.0,750.0 623.7,751.0 622.7,752.3 622.0,753.9 621.6,755.7 621.4,757.9 621.6,760.1 622.0,762.5 622.7,765.0 623.7,767.4 625.0,769.8 626.4,772.1 628.0,774.1 629.8,776.0 631.6,777.6 633.5,778.9 635.4,779.8 637.3,780.3 639.0,780.5 640.7,780.3 642.1,779.7 643.3,778.7 644.3,777.4 645.1,775.8 645.5,774.0 645.7,771.9"/>
<clipPath id="ch"><polygon points="645.7,771.9 645.5,769.6 645.1,767.2 644.3,764.7 643.3,762.3 642.1,759.9 640.7,757.6 639.0,755.6 637.3,753.7 635.4,752.1 633.5,750.9 631.6,749.9 629.8,749.4 628.0,749.2 626.4,749.4 625.0,750.0 623.7,751.0 622.7,752.3 622.0,753.9 621.6,755.7 621.4,757.9 621.6,760.1 622.0,762.5 622.7,765.0 623.7,767.4 625.0,769.8 626.4,772.1 628.0,774.1 629.8,776.0 631.6,777.6 633.5,778.9 635.4,779.8 637.3,780.3 639.0,780.5 640.7,780.3 642.1,779.7 643.3,778.7 644.3,777.4 645.1,775.8 645.5,774.0 645.7,771.9"/></clipPath>
<g clip-path="url(#ch)"><polygon fill="#dc9a10" points="633.5,778.9 668.2,758.9 698.2,810.9 663.5,830.9"/><line x1="633.5" y1="778.9" x2="668.2" y2="758.9" stroke="#0a0a18" stroke-width="1.3"/></g>
<path fill-rule="evenodd" fill="#ba8010" stroke="#0a0a18" stroke-width="1.6" stroke-linejoin="round" d="M503.2,699.0 L503.2,680.2 L503.6,680.5 L508.7,689.3 L532.3,702.9 L532.3,696.7 L537.5,699.7 L537.5,705.9 L560.4,719.1 L560.4,712.9 L565.6,715.9 L565.6,722.1 L588.2,735.2 L588.2,729.0 L593.4,732.0 L593.4,738.2 L616.9,751.8 L617.4,749.8 L618.1,748.1 L618.9,746.6 L620.0,745.3 L621.3,744.4 L622.7,743.6 L624.3,743.2 L626.0,743.0 L627.8,743.2 L629.7,743.6 L631.6,744.4 L633.5,745.4 L635.5,746.6 L637.4,748.1 L639.3,749.8 L641.1,751.8 L642.8,753.9 L644.4,756.1 L645.8,758.5 L647.0,760.9 L648.1,763.4 L649.0,766.0 L649.7,768.5 L650.2,770.9 L673.6,784.5 L673.6,778.3 L678.8,781.3 L678.8,787.5 L701.5,800.6 L701.5,794.4 L706.7,797.4 L706.7,803.6 L729.6,816.8 L729.6,810.6 L734.8,813.6 L734.8,819.8 L758.3,833.4 L763.4,830.5 L763.9,830.7 L763.9,849.5 L763.9,849.5 L763.4,849.2 L758.3,840.4 L734.8,826.8 L734.8,833.0 L729.6,830.0 L729.6,823.8 L706.7,810.6 L706.7,816.8 L701.5,813.8 L701.5,807.6 L678.8,794.5 L678.8,800.7 L673.6,797.7 L673.6,791.5 L650.2,777.9 L649.7,779.9 L649.0,781.6 L648.1,783.1 L647.0,784.4 L645.8,785.3 L644.4,786.1 L642.8,786.5 L641.1,786.7 L639.3,786.5 L637.4,786.1 L635.5,785.3 L633.5,784.4 L631.6,783.1 L629.7,781.6 L627.8,779.9 L626.0,777.9 L624.3,775.8 L622.7,773.6 L621.3,771.2 L620.0,768.8 L618.9,766.3 L618.1,763.7 L617.4,761.2 L616.9,758.8 L593.4,745.2 L593.4,751.4 L588.2,748.4 L588.2,742.2 L565.6,729.1 L565.6,735.3 L560.4,732.3 L560.4,726.1 L537.5,712.9 L537.5,719.1 L532.3,716.1 L532.3,709.9 L508.7,696.3 L503.6,699.2 L503.2,699.0Z M645.7,771.9 L645.5,769.6 L645.1,767.2 L644.3,764.7 L643.3,762.3 L642.1,759.9 L640.7,757.6 L639.0,755.6 L637.3,753.7 L635.4,752.1 L633.5,750.9 L631.6,749.9 L629.8,749.4 L628.0,749.2 L626.4,749.4 L625.0,750.0 L623.7,751.0 L622.7,752.3 L622.0,753.9 L621.6,755.7 L621.4,757.9 L621.6,760.1 L622.0,762.5 L622.7,765.0 L623.7,767.4 L625.0,769.8 L626.4,772.1 L628.0,774.1 L629.8,776.0 L631.6,777.6 L633.5,778.9 L635.4,779.8 L637.3,780.3 L639.0,780.5 L640.7,780.3 L642.1,779.7 L643.3,778.7 L644.3,777.4 L645.1,775.8 L645.5,774.0 L645.7,771.9Z"/>
<line x1="633.5" y1="750.9" x2="633.5" y2="745.4" stroke="#0a0a18" stroke-width="1.2"/>
<line x1="633.5" y1="778.9" x2="633.5" y2="784.4" stroke="#0a0a18" stroke-width="1.2"/>
<polygon fill="#9da1a2" stroke="#9da1a2" stroke-width="1.5" stroke-linejoin="round" points="1796.9,171.5 1831.5,184.3 1835.0,192.5 1829.5,229.5 1803.5,249.3 1790.5,249.3 1766.0,228.0 1759.6,194.0 1762.5,184.3"/>
<polygon fill="#d0d4d6" stroke="#262626" stroke-width="1.6" stroke-linejoin="round" points="1796.9,172.3 1829.4,184.8 1797.0,200.9 1764.4,184.2"/>
<polygon fill="#d0d4d6" stroke="#262626" stroke-width="1.6" stroke-linejoin="round" points="1760.0,193.8 1790.8,211.5 1791.4,247.8 1765.6,227.6"/>
<polygon fill="#d0d4d6" stroke="#262626" stroke-width="1.6" stroke-linejoin="round" points="1803.2,211.5 1834.0,193.0 1828.6,228.4 1802.4,247.8"/>
<circle cx="1797" cy="207.8" r="6" fill="#c3c7c9"/>
<line x1="1760.5" y1="229.5" x2="1787.5" y2="214" stroke="#b6f0b6" stroke-width="1.2"/>
<line x1="1760.5" y1="229.8" x2="1765.5" y2="227" stroke="#00e000" stroke-width="1.6"/>
<line x1="1760" y1="230" x2="1753" y2="198.5" stroke="#0000f0" stroke-width="2"/>
<line x1="1760" y1="230" x2="1784.6" y2="252.3" stroke="#f00000" stroke-width="1.8"/>
<text x="1741" y="186" font-family="Liberation Serif,serif" font-weight="bold" font-size="9" fill="#111">Z</text>
<text x="1787" y="262" font-family="Liberation Serif,serif" font-weight="bold" font-size="9" fill="#111">X</text>
<text transform="matrix(0.72,0.46,0.04,1.5,1769.2,217.5)" font-family="Liberation Sans,sans-serif" font-size="5.2" font-weight="bold" fill="#222">FRONT</text>
<text transform="matrix(0.74,-0.46,-0.16,1.5,1811.4,229.6)" font-family="Liberation Sans,sans-serif" font-size="5.2" font-weight="bold" fill="#222">RIGHT</text>
<text transform="matrix(0.8,0.3,-0.8,0.36,1793.4,183)" font-family="Liberation Sans,sans-serif" font-size="4.6" font-weight="bold" fill="#333">TOP</text>
<line x1="1876.2" y1="949.6" x2="1876.2" y2="921" stroke="#1c1c8a" stroke-width="2"/>
<polygon fill="#1c1c8a" points="1876.2,920 1873.1,931.7 1879.3,931.7"/>
<line x1="1876.2" y1="949.6" x2="1893" y2="939.5" stroke="#1c8a1c" stroke-width="1.6"/>
<polygon fill="#1c8a1c" points="1895,938.2 1887.2,939.6 1889.6,944.6"/>
<line x1="1876.2" y1="949.6" x2="1900" y2="964.3" stroke="#8a1c1c" stroke-width="1.6"/>
<polygon fill="#8a1c1c" points="1901.8,965.6 1893.6,957 1890,962.6"/>
<text x="1878.6" y="920.0" font-family="Liberation Sans,sans-serif" font-size="9.5" fill="#0a0a0a">Z</text>
<text x="1896.6" y="940.0" font-family="Liberation Sans,sans-serif" font-size="9.5" fill="#0a0a0a">Y</text>
<text x="1904.8" y="966.0" font-family="Liberation Sans,sans-serif" font-size="9.5" fill="#0a0a0a">X</text>
</svg>
</div>
<div id="mdibar" class="abs"><div id="mdiline" class="abs"></div><div id="mditab" class="abs"><span class="st2">651<i>橡胶止水带</i>(1)-<i>蔡维川</i> : 1*</span></div></div>
<div id="status" class="abs">
  <div class="st" style="left:2.5px">Mirrored.Edge127 | -52.27 mm; 655.28 mm; 9.00 mm | _651<i>橡胶止水带</i>_1__<i>蔡维川</i>#Part.Body.Mirrored.Edge127</div>
  <div class="st" style="left:1708px;top:7.5px;width:40px;overflow:hidden">Blender</div>
  <div class="st" style="left:1769px;top:7.5px">1564.17 mm x 738.91 mm</div>
</div>
<svg class="abs" style="left:0;top:0;z-index:40" width="1920" height="1040" viewBox="0 0 1920 1040"><g transform="translate(8,7.2) scale(1)"><path d="M1,1.1 H9.6 V4.9 H4.8 V7.1 H8.2 V10.6 H4.8 V15.8 H1Z" fill="#d41414" stroke="#a80c0c" stroke-width="0.4" stroke-linejoin="round" stroke-linecap="round"/><path d="M1.4,1.5 H9.2 V3 H1.4Z" fill="#f03a3a"/><polygon points="15.8619,9.66553 15.8921,10.5889 14.3007,11.1629 14.0947,11.7924 15.0387,13.1962 14.4683,13.923 12.8803,13.3398 12.3178,13.6896 12.1386,15.3718 11.2345,15.5619 10.3929,14.0944 9.73714,14.0007 8.51853,15.1742 7.70376,14.7387 8.00237,13.0735 7.56022,12.5803 5.87245,12.6959 5.52823,11.8386 6.82733,10.7549 6.80565,10.0929 5.43844,9.09654 5.72584,8.21853 7.41756,8.22345 7.82649,7.70237 7.41959,6.06031 8.20412,5.57245 9.49689,6.66364 10.1451,6.52733 10.8889,5.00788 11.8035,5.13844 12.0924,6.80532 12.6765,7.11756 14.223,6.43169 14.8397,7.11959 13.9896,8.5822 14.2364,9.19689" fill="#3f78c0" stroke="#2a5a9c" stroke-width="0.4" stroke-linejoin="round"/><circle cx="10.6" cy="10.3" r="1.5" fill="#fdfdfd"/><polygon points="10.2,5.4 13.6,2.6 12.8,1.6 16.8,0.6 16.4,4.6 15.4,3.8 11.8,6.8" fill="#e0dc28" stroke="#b4b010" stroke-width="0.4" stroke-linejoin="round"/></g>
<line x1="1802" y1="15.4" x2="1812" y2="15.4" stroke="#111" stroke-width="1" stroke-linecap="butt"/>
<rect x="1847.5" y="10.5" width="9.5" height="9.5" fill="none" stroke="#111" stroke-width="1"/>
<line x1="1893.2" y1="10.2" x2="1903" y2="20" stroke="#111" stroke-width="1.1" stroke-linecap="butt"/><line x1="1903" y1="10.2" x2="1893.2" y2="20" stroke="#111" stroke-width="1.1" stroke-linecap="butt"/>
<ellipse cx="195.9" cy="95.9" rx="5" ry="3.7" fill="none" stroke="#5e5e5e" stroke-width="0.9"/>
<circle cx="195.9" cy="95.9" r="2.2" fill="#5e5e5e"/>
<polygon points="218.806,94.9441 218.9,95.9 217.556,96.6074 217.35,97.2876 218.074,98.6223 217.465,99.3648 216.014,98.9149 215.388,99.25 214.956,100.706 214,100.8 213.293,99.4563 212.612,99.25 211.278,99.9742 210.535,99.3648 210.985,97.9145 210.65,97.2876 209.194,96.8559 209.1,95.9 210.444,95.1926 210.65,94.5124 209.926,93.1777 210.535,92.4352 211.986,92.8851 212.612,92.55 213.044,91.0942 214,91 214.707,92.3437 215.388,92.55 216.722,91.8258 217.465,92.4352 217.015,93.8855 217.35,94.5124" fill="#5e5e5e"/><circle cx="214" cy="95.9" r="1.8" fill="#c1c1c1"/>
<rect x="227.4" y="91.4" width="9.2" height="9.2" fill="none" stroke="#5e5e5e" stroke-width="1"/><line x1="227.4" y1="94" x2="236.6" y2="94" stroke="#5e5e5e" stroke-width="1" stroke-linecap="butt"/>
<line x1="245.4" y1="91.4" x2="254.6" y2="100.4" stroke="#5e5e5e" stroke-width="1.7" stroke-linecap="butt"/><line x1="254.6" y1="91.4" x2="245.4" y2="100.4" stroke="#5e5e5e" stroke-width="1.7" stroke-linecap="butt"/>
<rect x="265" y="89.4" width="0.9" height="0.9" fill="#555"/>
<rect x="263" y="91.4" width="0.9" height="0.9" fill="#555"/><rect x="267" y="91.4" width="0.9" height="0.9" fill="#555"/>
<rect x="265" y="93.4" width="0.9" height="0.9" fill="#555"/>
<rect x="263" y="95.4" width="0.9" height="0.9" fill="#555"/><rect x="267" y="95.4" width="0.9" height="0.9" fill="#555"/>
<rect x="265" y="97.4" width="0.9" height="0.9" fill="#555"/>
<rect x="263" y="99.4" width="0.9" height="0.9" fill="#555"/><rect x="267" y="99.4" width="0.9" height="0.9" fill="#555"/>
<rect x="265" y="101.4" width="0.9" height="0.9" fill="#555"/>
<rect x="263" y="103.4" width="0.9" height="0.9" fill="#555"/><rect x="267" y="103.4" width="0.9" height="0.9" fill="#555"/>
<g transform="translate(13,998.2) scale(0.98)"><path d="M1,1.1 H9.6 V4.9 H4.8 V7.1 H8.2 V10.6 H4.8 V15.8 H1Z" fill="#d41414" stroke="#a80c0c" stroke-width="0.4" stroke-linejoin="round" stroke-linecap="round"/><path d="M1.4,1.5 H9.2 V3 H1.4Z" fill="#f03a3a"/><polygon points="15.8619,9.66553 15.8921,10.5889 14.3007,11.1629 14.0947,11.7924 15.0387,13.1962 14.4683,13.923 12.8803,13.3398 12.3178,13.6896 12.1386,15.3718 11.2345,15.5619 10.3929,14.0944 9.73714,14.0007 8.51853,15.1742 7.70376,14.7387 8.00237,13.0735 7.56022,12.5803 5.87245,12.6959 5.52823,11.8386 6.82733,10.7549 6.80565,10.0929 5.43844,9.09654 5.72584,8.21853 7.41756,8.22345 7.82649,7.70237 7.41959,6.06031 8.20412,5.57245 9.49689,6.66364 10.1451,6.52733 10.8889,5.00788 11.8035,5.13844 12.0924,6.80532 12.6765,7.11756 14.223,6.43169 14.8397,7.11959 13.9896,8.5822 14.2364,9.19689" fill="#3f78c0" stroke="#2a5a9c" stroke-width="0.4" stroke-linejoin="round"/><circle cx="10.6" cy="10.3" r="1.5" fill="#fdfdfd"/><polygon points="10.2,5.4 13.6,2.6 12.8,1.6 16.8,0.6 16.4,4.6 15.4,3.8 11.8,6.8" fill="#e0dc28" stroke="#b4b010" stroke-width="0.4" stroke-linejoin="round"/></g>
<rect x="205.4" y="1000.4" width="13" height="13" fill="#e27c52" stroke="#d4452f" stroke-width="1" rx="2.2"/>
<line x1="208.8" y1="1003.8" x2="215" y2="1010" stroke="#fff" stroke-width="2" stroke-linecap="butt"/><line x1="215" y1="1003.8" x2="208.8" y2="1010" stroke="#fff" stroke-width="2" stroke-linecap="butt"/>
<line x1="1670.5" y1="1021" x2="1670.5" y2="1040" stroke="#d0d0d0" stroke-width="1" stroke-linecap="butt"/>
<line x1="1676.5" y1="1021" x2="1676.5" y2="1040" stroke="#d0d0d0" stroke-width="1" stroke-linecap="butt"/>
<line x1="1764.5" y1="1021" x2="1764.5" y2="1040" stroke="#d0d0d0" stroke-width="1" stroke-linecap="butt"/>
<line x1="1902.5" y1="1021" x2="1902.5" y2="1040" stroke="#d0d0d0" stroke-width="1" stroke-linecap="butt"/>
<rect x="1694.6" y="1028" width="7.6" height="11.4" fill="#f4f4f4" stroke="#333" stroke-width="1.3" rx="3.2"/>
<line x1="1698.4" y1="1028.6" x2="1698.4" y2="1033" stroke="#333" stroke-width="1.2" stroke-linecap="butt"/><line x1="1695" y1="1033.2" x2="1702" y2="1033.2" stroke="#333" stroke-width="0.9" stroke-linecap="butt"/>
<polygon points="1749,1032 1756,1032 1752.5,1036" fill="#111"/></svg>
<div id="winborder" class="abs"></div>

</body></html>
